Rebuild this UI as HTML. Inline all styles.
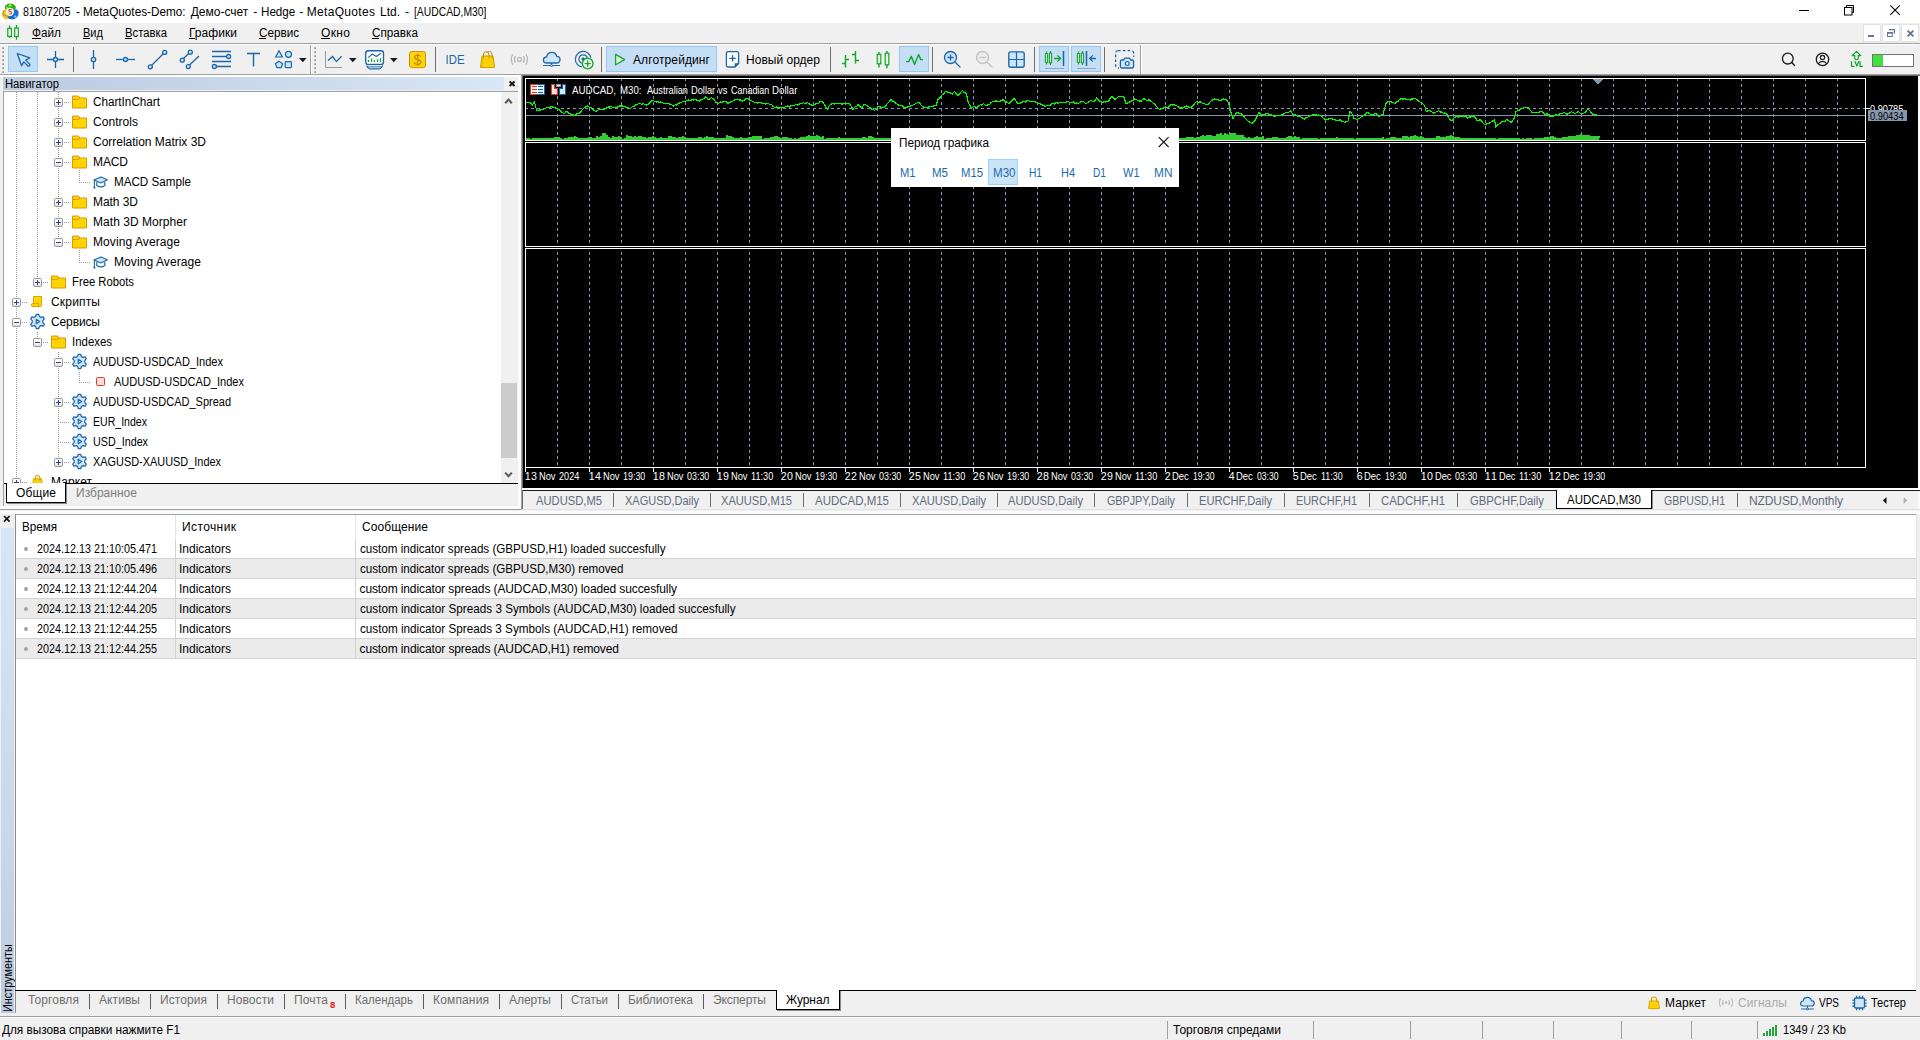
<!DOCTYPE html>
<html><head><meta charset="utf-8"><title>MetaTrader 5</title>
<style>
html,body{margin:0;padding:0;}
body{width:1920px;height:1040px;overflow:hidden;background:#f0f0f0;position:relative;font-family:"Liberation Sans",sans-serif;font-size:12px;}
div,svg,span.t{position:absolute;}
span.t{white-space:pre;}
svg{overflow:visible;}
</style></head><body>
<div style="left:0px;top:0px;width:1920px;height:23px;background:#ffffff;"></div>
<svg style="left:2px;top:3px;" width="17" height="17" viewBox="0 0 17 17">
<ellipse cx="8.3" cy="4.4" rx="5.5" ry="3.9" fill="#2aae14"/>
<ellipse cx="5.2" cy="4.6" rx="1.8" ry="1" transform="rotate(-35 5.2 4.6)" fill="#6fdc48"/>
<ellipse cx="8.2" cy="2.4" rx="1.5" ry="1.3" fill="#8be868"/>
<ellipse cx="3.9" cy="11.4" rx="3.6" ry="4.8" transform="rotate(-22 3.9 11.4)" fill="#d4a412"/>
<ellipse cx="3.4" cy="10" rx="1.2" ry="2" transform="rotate(-15 3.4 10)" fill="#f0cf3c"/>
<path d="M5 14 Q8 17.6 13.4 15.4 L11 12 Z" fill="#1463d2"/>
<ellipse cx="12.9" cy="11" rx="3.5" ry="4.9" transform="rotate(20 12.9 11)" fill="#1a6fe0"/>
<ellipse cx="3.6" cy="14.6" rx="2.6" ry="1.4" transform="rotate(20 3.6 14.6)" fill="#f2c81e"/>
<ellipse cx="13.2" cy="13.6" rx="1.3" ry="1.1" fill="#62d0ff"/>
<circle cx="7.9" cy="8.8" r="4.15" fill="#f3f1ef"/>
<path d="M9.7 6.5 H7.1 V8.5 Q8.2 8.1 9 8.5 Q9.9 9 9.7 10 Q9.4 11.2 6.9 10.7" fill="none" stroke="#e0661c" stroke-width="1.15"/>
</svg>
<span class="t" style="left:23.3px;top:3.84px;font-size:12px;line-height:16px;color:#000;transform-origin:0 0;transform:scaleX(0.8878);">81807205</span>
<span class="t" style="left:76px;top:3.84px;font-size:12px;line-height:16px;color:#000;letter-spacing:0.000px;">-</span>
<span class="t" style="left:82.7px;top:3.84px;font-size:12px;line-height:16px;color:#000;transform-origin:0 0;transform:scaleX(0.9798);">MetaQuotes-Demo:</span>
<span class="t" style="left:190.7px;top:3.84px;font-size:12px;line-height:16px;color:#000;letter-spacing:-0.001px;">Демо-счет</span>
<span class="t" style="left:253.3px;top:3.84px;font-size:12px;line-height:16px;color:#000;letter-spacing:0.000px;">-</span>
<span class="t" style="left:260.7px;top:3.84px;font-size:12px;line-height:16px;color:#000;transform-origin:0 0;transform:scaleX(0.9696);">Hedge</span>
<span class="t" style="left:299.3px;top:3.84px;font-size:12px;line-height:16px;color:#000;letter-spacing:0.000px;">-</span>
<span class="t" style="left:306.7px;top:3.84px;font-size:12px;line-height:16px;color:#000;letter-spacing:0.325px;">MetaQuotes</span>
<span class="t" style="left:380px;top:3.84px;font-size:12px;line-height:16px;color:#000;letter-spacing:-0.005px;">Ltd.</span>
<span class="t" style="left:405px;top:3.84px;font-size:12px;line-height:16px;color:#000;letter-spacing:0.000px;">-</span>
<span class="t" style="left:414.3px;top:3.84px;font-size:12px;line-height:16px;color:#000;transform-origin:0 0;transform:scaleX(0.8616);">[AUDCAD,M30]</span>
<div style="left:1799px;top:10px;width:10px;height:1px;background:#000;"></div>
<svg style="left:1844px;top:5px;" width="11" height="11" viewBox="0 0 11 11"><path d="M2.5 2.5 V0.5 H9.5 V7.5 H8" fill="none" stroke="#000" stroke-width="1"/><rect x="0.5" y="2.5" width="7.5" height="7.5" fill="none" stroke="#000" stroke-width="1"/></svg>
<svg style="left:1890px;top:5px;" width="11" height="11" viewBox="0 0 11 11"><path d="M0.3 0.3 L9.8 9.8 M9.8 0.3 L0.3 9.8" stroke="#000" stroke-width="1.1" fill="none"/></svg>
<svg style="left:5px;top:25px;" width="16" height="16" viewBox="0 0 16 16">
<g fill="#f2fbf2" stroke="#0fa52a" stroke-width="1.2">
<path d="M4.6 0.6 V3 M4.6 11.4 V13"/><rect x="2.8" y="3.4" width="3.6" height="8"/>
<path d="M11.5 0 V3 M11.5 11.6 V14.8"/><rect x="9.7" y="3" width="3.6" height="8.6"/>
</g></svg>
<span class="t" style="left:32px;top:24.84px;font-size:12px;line-height:16px;color:#000;transform-origin:0 0;transform:scaleX(0.9825);">Файл</span>
<span class="t" style="left:83px;top:24.84px;font-size:12px;line-height:16px;color:#000;transform-origin:0 0;transform:scaleX(0.9209);">Вид</span>
<span class="t" style="left:125px;top:24.84px;font-size:12px;line-height:16px;color:#000;transform-origin:0 0;transform:scaleX(0.9415);">Вставка</span>
<span class="t" style="left:189px;top:24.84px;font-size:12px;line-height:16px;color:#000;letter-spacing:0.049px;">Графики</span>
<span class="t" style="left:259px;top:24.84px;font-size:12px;line-height:16px;color:#000;transform-origin:0 0;transform:scaleX(0.9734);">Сервис</span>
<span class="t" style="left:321px;top:24.84px;font-size:12px;line-height:16px;color:#000;letter-spacing:0.370px;">Окно</span>
<span class="t" style="left:372px;top:24.84px;font-size:12px;line-height:16px;color:#000;transform-origin:0 0;transform:scaleX(0.9771);">Справка</span>
<div style="left:32px;top:38px;width:9px;height:1px;background:#000;"></div>
<div style="left:83px;top:38px;width:7px;height:1px;background:#000;"></div>
<div style="left:125px;top:38px;width:7px;height:1px;background:#000;"></div>
<div style="left:189px;top:38px;width:6px;height:1px;background:#000;"></div>
<div style="left:259px;top:38px;width:7px;height:1px;background:#000;"></div>
<div style="left:321px;top:38px;width:9px;height:1px;background:#000;"></div>
<div style="left:372px;top:38px;width:7px;height:1px;background:#000;"></div>
<div style="left:1863px;top:24px;width:18px;height:18px;background:#ffffff;box-shadow:inset 0 0 0 1px #e2e2e2;"></div>
<div style="left:1882px;top:24px;width:18px;height:18px;background:#ffffff;box-shadow:inset 0 0 0 1px #e2e2e2;"></div>
<div style="left:1901px;top:24px;width:18px;height:18px;background:#ffffff;box-shadow:inset 0 0 0 1px #e2e2e2;"></div>
<div style="left:1868px;top:35px;width:6px;height:2px;background:#62788e;"></div>
<svg style="left:1886px;top:28px;" width="10" height="10" viewBox="0 0 10 10"><path d="M3 1.6 H8.9 M8.4 1 V5.8" fill="none" stroke="#62788e" stroke-width="1.2"/><rect x="1.5" y="5" width="4.8" height="3.5" fill="#fff" stroke="#62788e" stroke-width="1"/><path d="M1 4.8 H6.8" stroke="#62788e" stroke-width="1.6"/></svg>
<svg style="left:1906px;top:29px;" width="9" height="9" viewBox="0 0 9 9"><path d="M1.6 1.6 L7.4 7.4 M7.4 1.6 L1.6 7.4" stroke="#62788e" stroke-width="1.9" fill="none"/></svg>
<div style="left:0px;top:43px;width:1920px;height:1px;background:#a0a0a0;"></div>
<div style="left:0px;top:44px;width:1920px;height:1px;background:#ffffff;"></div>
<div style="left:0px;top:74px;width:1920px;height:1px;background:#a0a0a0;"></div>
<div style="left:0px;top:75px;width:1920px;height:1px;background:#f7f7f7;"></div>
<div style="left:0px;top:1016px;width:1920px;height:1px;background:#a0a0a0;"></div>
<div style="left:0px;top:1017px;width:1920px;height:1px;background:#ffffff;"></div>
<span class="t" style="left:2px;top:1021.74px;font-size:12px;line-height:16px;color:#000;transform-origin:0 0;transform:scaleX(0.9811);">Для вызова справки нажмите F1</span>
<div style="left:1167px;top:1021px;width:1px;height:18px;background:#a0a0a0;"></div>
<div style="left:1313px;top:1021px;width:1px;height:18px;background:#a0a0a0;"></div>
<div style="left:1410px;top:1021px;width:1px;height:18px;background:#a0a0a0;"></div>
<div style="left:1482px;top:1021px;width:1px;height:18px;background:#a0a0a0;"></div>
<div style="left:1553px;top:1021px;width:1px;height:18px;background:#a0a0a0;"></div>
<div style="left:1621px;top:1021px;width:1px;height:18px;background:#a0a0a0;"></div>
<div style="left:1691px;top:1021px;width:1px;height:18px;background:#a0a0a0;"></div>
<div style="left:1757px;top:1021px;width:1px;height:18px;background:#a0a0a0;"></div>
<span class="t" style="left:1173px;top:1021.74px;font-size:12px;line-height:16px;color:#000;letter-spacing:0.021px;">Торговля спредами</span>
<div style="left:1763px;top:1033px;width:2px;height:3px;background:#22a83a;"></div>
<div style="left:1766px;top:1031px;width:2px;height:5px;background:#22a83a;"></div>
<div style="left:1769px;top:1029px;width:2px;height:7px;background:#22a83a;"></div>
<div style="left:1772px;top:1027px;width:2px;height:9px;background:#22a83a;"></div>
<div style="left:1775px;top:1025px;width:2px;height:11px;background:#22a83a;"></div>
<span class="t" style="left:1783px;top:1021.74px;font-size:12px;line-height:16px;color:#000;transform-origin:0 0;transform:scaleX(0.9256);">1349 / 23 Kb</span>
<div style="left:2px;top:47px;width:2px;height:2px;background:#b8b8b8;"></div>
<div style="left:3px;top:48px;width:1px;height:1px;background:#909090;"></div>
<div style="left:2px;top:51px;width:2px;height:2px;background:#b8b8b8;"></div>
<div style="left:3px;top:52px;width:1px;height:1px;background:#909090;"></div>
<div style="left:2px;top:55px;width:2px;height:2px;background:#b8b8b8;"></div>
<div style="left:3px;top:56px;width:1px;height:1px;background:#909090;"></div>
<div style="left:2px;top:59px;width:2px;height:2px;background:#b8b8b8;"></div>
<div style="left:3px;top:60px;width:1px;height:1px;background:#909090;"></div>
<div style="left:2px;top:63px;width:2px;height:2px;background:#b8b8b8;"></div>
<div style="left:3px;top:64px;width:1px;height:1px;background:#909090;"></div>
<div style="left:2px;top:67px;width:2px;height:2px;background:#b8b8b8;"></div>
<div style="left:3px;top:68px;width:1px;height:1px;background:#909090;"></div>
<div style="left:2px;top:71px;width:2px;height:2px;background:#b8b8b8;"></div>
<div style="left:3px;top:72px;width:1px;height:1px;background:#909090;"></div>
<div style="left:8px;top:46px;width:30px;height:26px;background:#c4def5;box-shadow:inset 0 0 0 1px #92c9f7;"></div>
<div style="left:73px;top:47px;width:1px;height:25px;background:#707070;"></div>
<svg style="left:299px;top:58px;" width="8" height="5" viewBox="0 0 8 5"><path d="M0 0 H7.6 L3.8 4.2 Z" fill="#1a1a1a"/></svg>
<div style="left:310px;top:45px;width:1px;height:29px;background:#a0a0a0;"></div>
<div style="left:311px;top:45px;width:1px;height:29px;background:#ffffff;"></div>
<div style="left:314px;top:47px;width:2px;height:2px;background:#b8b8b8;"></div>
<div style="left:315px;top:48px;width:1px;height:1px;background:#909090;"></div>
<div style="left:314px;top:51px;width:2px;height:2px;background:#b8b8b8;"></div>
<div style="left:315px;top:52px;width:1px;height:1px;background:#909090;"></div>
<div style="left:314px;top:55px;width:2px;height:2px;background:#b8b8b8;"></div>
<div style="left:315px;top:56px;width:1px;height:1px;background:#909090;"></div>
<div style="left:314px;top:59px;width:2px;height:2px;background:#b8b8b8;"></div>
<div style="left:315px;top:60px;width:1px;height:1px;background:#909090;"></div>
<div style="left:314px;top:63px;width:2px;height:2px;background:#b8b8b8;"></div>
<div style="left:315px;top:64px;width:1px;height:1px;background:#909090;"></div>
<div style="left:314px;top:67px;width:2px;height:2px;background:#b8b8b8;"></div>
<div style="left:315px;top:68px;width:1px;height:1px;background:#909090;"></div>
<div style="left:314px;top:71px;width:2px;height:2px;background:#b8b8b8;"></div>
<div style="left:315px;top:72px;width:1px;height:1px;background:#909090;"></div>
<svg style="left:349px;top:58px;" width="8" height="5" viewBox="0 0 8 5"><path d="M0 0 H7.6 L3.8 4.2 Z" fill="#1a1a1a"/></svg>
<svg style="left:390px;top:58px;" width="8" height="5" viewBox="0 0 8 5"><path d="M0 0 H7.6 L3.8 4.2 Z" fill="#1a1a1a"/></svg>
<div style="left:435px;top:47px;width:1px;height:25px;background:#707070;"></div>
<div style="left:601px;top:47px;width:1px;height:25px;background:#707070;"></div>
<div style="left:606px;top:46px;width:111px;height:26px;background:#c4def5;box-shadow:inset 0 0 0 1px #92c9f7;"></div>
<span class="t" style="left:633px;top:51.74px;font-size:12px;line-height:16px;color:#000;letter-spacing:0.109px;">Алготрейдинг</span>
<span class="t" style="left:746px;top:51.74px;font-size:12px;line-height:16px;color:#000;letter-spacing:0.019px;">Новый ордер</span>
<div style="left:830px;top:47px;width:1px;height:25px;background:#707070;"></div>
<div style="left:899px;top:46px;width:30px;height:26px;background:#c4def5;box-shadow:inset 0 0 0 1px #92c9f7;"></div>
<div style="left:932px;top:47px;width:1px;height:25px;background:#707070;"></div>
<div style="left:1034px;top:47px;width:1px;height:25px;background:#707070;"></div>
<div style="left:1039px;top:46px;width:30px;height:26px;background:#c4def5;box-shadow:inset 0 0 0 1px #92c9f7;"></div>
<div style="left:1071px;top:46px;width:30px;height:26px;background:#c4def5;box-shadow:inset 0 0 0 1px #92c9f7;"></div>
<div style="left:1045px;top:68px;width:19px;height:1px;background:#a3a3a3;"></div>
<div style="left:1077px;top:68px;width:19px;height:1px;background:#a3a3a3;"></div>
<div style="left:1104px;top:47px;width:1px;height:25px;background:#707070;"></div>
<div style="left:1140px;top:45px;width:1px;height:29px;background:#a0a0a0;"></div>
<div style="left:1141px;top:45px;width:1px;height:29px;background:#ffffff;"></div>
<div style="left:1872px;top:54px;width:42px;height:13px;background:#fff;box-shadow:inset 0 0 0 1px #747474;"></div>
<div style="left:1873px;top:55px;width:10px;height:11px;background:#3fe03f;"></div>
<svg style="left:0px;top:0px;" width="1920" height="80" viewBox="0 0 1920 80"><path d="M17.3 53.5 L29.8 57.8 L25.7 60.1 L29.7 64.1 Q30.3 65.6 28.9 66 Q27.9 66.4 27.4 65.6 L23.9 61.9 L21.6 65.7 Z" stroke="#1a66aa" fill="#c8e6fb" stroke-width="1.3" stroke-linejoin="round"/><path d="M47 59.5 H64 M55.5 51 V68" stroke="#1a66aa" fill="none" stroke-width="1.3" /><circle cx="55.5" cy="59.5" r="2" stroke="#1a66aa" fill="#cfe6fa" stroke-width="1.3"/><path d="M93.5 50 V69" stroke="#1a66aa" fill="none" stroke-width="1.3" /><circle cx="93.5" cy="59.5" r="2.2" stroke="#1a66aa" fill="#cfe6fa" stroke-width="1.3"/><path d="M116 59.5 H135" stroke="#1a66aa" fill="none" stroke-width="1.3" /><circle cx="125.5" cy="59.5" r="2" stroke="#1a66aa" fill="#cfe6fa" stroke-width="1.3"/><path d="M151 66 L164 53" stroke="#1a66aa" fill="none" stroke-width="1.3" /><circle cx="150.3" cy="66.8" r="2" stroke="#1a66aa" fill="#cfe6fa" stroke-width="1.3"/><circle cx="164.7" cy="52.4" r="2" stroke="#1a66aa" fill="#cfe6fa" stroke-width="1.3"/><path d="M183 59 L189.5 52.8 M189 65.5 L199 56" stroke="#1a66aa" fill="none" stroke-width="1.3" /><circle cx="182.3" cy="60.2" r="2" stroke="#1a66aa" fill="#cfe6fa" stroke-width="1.3"/><circle cx="190.3" cy="52.2" r="2" stroke="#1a66aa" fill="#cfe6fa" stroke-width="1.3"/><circle cx="188.3" cy="66.6" r="2" stroke="#1a66aa" fill="#cfe6fa" stroke-width="1.3"/><path d="M212 51.5 H231 M212 56.5 H227 M212 61.5 H231 M217 66.5 H231" stroke="#1a66aa" fill="none" stroke-width="1.3" /><circle cx="228.6" cy="56.5" r="2" stroke="#1a66aa" fill="#cfe6fa" stroke-width="1.3"/><circle cx="214.4" cy="66.5" r="2" stroke="#1a66aa" fill="#cfe6fa" stroke-width="1.3"/><path d="M247 53.5 H260 M253.5 53.5 V66.5" stroke="#1a66aa" fill="none" stroke-width="1.4" /><path d="M275.6 57 L279 50.8 L282.4 57 Z" stroke="#1a66aa" fill="#cfe6fa" stroke-width="1.2" /><circle cx="288.5" cy="54.3" r="3" stroke="#1a66aa" fill="#cfe6fa" stroke-width="1.2"/><path d="M279 61.2 L282.6 63.8 L281.2 67.6 H276.8 L275.4 63.8 Z" stroke="#1a66aa" fill="#cfe6fa" stroke-width="1.2" /><rect x="285.2" y="61.6" width="6.2" height="6" rx="0.8" stroke="#1a66aa" fill="#cfe6fa" stroke-width="1.2"/><path d="M325.5 51 V67.5 H342" stroke="#9a9a9a" fill="none" stroke-width="1" /><path d="M328 60.5 L332.6 56.4 L336.4 61.6 L341.6 56.2" stroke="#1a66aa" fill="none" stroke-width="1.3" /><rect x="365.7" y="50.7" width="17.8" height="13.8" rx="2.6" stroke="#1a66aa" fill="#fff" stroke-width="1.35"/><path d="M366.6 65.6 L368.2 68 Q368.8 68.8 370 68.8 H379.2 Q380.4 68.8 381 68 L382.6 65.6" stroke="#1a66aa" fill="#fff" stroke-width="1.2" /><path d="M367.6 66.9 H381.6" stroke="#1a66aa" fill="none" stroke-width="1.0" /><path d="M368.2 57.6 L372.3 54 L376.3 56.5 L380.7 53.2" stroke="#1a66aa" fill="none" stroke-width="1.15" /><rect x="367.8" y="59.8" width="1.25" height="2.3" rx="0.5" fill="#12a52a"/><rect x="370.9" y="58.2" width="1.25" height="3.9" rx="0.5" fill="#12a52a"/><rect x="373.8" y="60" width="1.25" height="2.1" rx="0.5" fill="#12a52a"/><rect x="376.9" y="59" width="1.25" height="3.1" rx="0.5" fill="#12a52a"/><rect x="379.9" y="58" width="1.25" height="4.1" rx="0.5" fill="#12a52a"/><rect x="409.5" y="51.5" width="16" height="16.2" rx="2.4" fill="#ffd400" stroke="#c9920c" stroke-width="1"/><path d="M420.6 56.8 Q420.2 55 417.6 55 Q414.6 55 414.6 57.2 Q414.6 59 417.6 59.6 Q420.8 60.2 420.8 62.2 Q420.8 64.4 417.6 64.4 Q414.8 64.4 414.4 62.4 M417.6 53.6 V65.8" stroke="#c48c08" fill="none" stroke-width="1.25" /><text x="445.6" y="64.3" font-size="12.5" fill="#1a66aa" font-family="Liberation Sans" textLength="19" lengthAdjust="spacingAndGlyphs">IDE</text><path d="M482 56 L480.5 67.5 H494.5 L493 56 Z" stroke="#cf9a08" fill="#ffd200" stroke-width="1" /><path d="M482.6 56.6 L481.6 67" stroke="#e8b400" fill="none" stroke-width="1.2" /><path d="M483.4 58.6 V55 Q483.4 51.5 486.2 51.5 Q489 51.5 489 55 V58.6 M486.6 53 Q487.4 51.5 489.4 51.5 Q492.2 51.5 492.2 55 V58.6" stroke="#c9920c" fill="none" stroke-width="1.0" /><circle cx="519.4" cy="59.4" r="2" stroke="#b6b6b6" fill="none" stroke-width="1.2"/><path d="M515.4 56 Q513.4 59.4 515.4 62.8 M523.4 56 Q525.4 59.4 523.4 62.8 M512.8 54.2 Q509.8 59.4 512.8 64.6 M526 54.2 Q529 59.4 526 64.6" stroke="#b6b6b6" fill="none" stroke-width="1.2" /><path d="M547 63 Q543.2 63 543.4 59.8 Q543.6 57 546.6 56.8 Q547.4 52.4 551.8 52.4 Q555.8 52.4 556.8 56.4 Q560.2 56.6 560 60 Q559.8 63 556.4 63 Z" stroke="#1a66aa" fill="#cfe6fa" stroke-width="1.3" /><path d="M543 65.5 H560 M551.5 63 V65.5" stroke="#1a66aa" fill="none" stroke-width="1.1" /><circle cx="551.5" cy="65.6" r="1" stroke="#1a66aa" fill="#cfe6fa" stroke-width="1"/><circle cx="583.2" cy="59.1" r="1.5" stroke="#1a66aa" fill="#1a66aa" stroke-width="0.5"/><path d="M581.8 63.1 A4.2 4.2 0 1 1 587.3 58.5 M581.85 66.9 A7.8 7.8 0 1 1 590.8 57.6" stroke="#1a66aa" fill="none" stroke-width="1.2" /><circle cx="587.7" cy="63.6" r="5.3" stroke="#14a32c" fill="#eeffee" stroke-width="1.4"/><path d="M584.6 63.6 H590.8 M587.7 60.5 V66.7" stroke="#14a32c" fill="none" stroke-width="1.3" /><path d="M615.6 54.4 L624.6 59.6 L615.6 64.8 Z" stroke="#16a82e" fill="#e2f6e4" stroke-width="1.3" stroke-linejoin="round"/><path d="M728.2 51.6 H736.8 Q738.6 51.6 738.6 53.4 V63.4 L735 67 H728.2 Q726.4 67 726.4 65.2 V53.4 Q726.4 51.6 728.2 51.6 Z" stroke="#1a66aa" fill="#fff" stroke-width="1.3" /><path d="M738.6 63.4 H735 V67 Z" stroke="#1a66aa" fill="#1a66aa" stroke-width="0.6" /><path d="M729.4 58.4 H735.8 M732.6 55.2 V61.6" stroke="#1a66aa" fill="none" stroke-width="1.3" /><path d="M845.5 55 V67.4 M842 63.5 H845.5 M845.5 59.5 H849 M855.5 51 V63.4 M852 54.5 H855.5 M855.5 60.5 H859" stroke="#0fa52a" fill="none" stroke-width="1.4" /><path d="M879 52 V54 M879 64 V67.4 M887 51 V53 M887 65 V68.2" stroke="#0fa52a" fill="none" stroke-width="1.4" /><rect x="877.2" y="54.2" width="3.6" height="9.6" fill="#e2f6e4" stroke="#0fa52a" stroke-width="1.2"/><rect x="885.2" y="53.2" width="3.6" height="11.6" fill="#e2f6e4" stroke="#0fa52a" stroke-width="1.2"/><path d="M906 61.6 H908.6 L911.4 56.4 L914.6 64.6 L918.6 54.6 L920.8 59.6 H923" stroke="#0fa52a" fill="none" stroke-width="1.4" stroke-linejoin="round"/><circle cx="950.5" cy="57.5" r="6" stroke="#1a66aa" fill="#cfe6fa" stroke-width="1.3"/><path d="M947.4 57.5 H953.6 M950.5 54.4 V60.6" stroke="#1a66aa" fill="none" stroke-width="1.3" /><path d="M955 62 L960.4 67.4" stroke="#1a66aa" fill="none" stroke-width="1.3" /><circle cx="982.5" cy="57.5" r="6" stroke="#c2c2c2" fill="#ececec" stroke-width="1.4"/><path d="M979.4 57.5 H985.6" stroke="#c2c2c2" fill="none" stroke-width="1.3" /><path d="M987 62 L992.4 67.4" stroke="#c2c2c2" fill="none" stroke-width="1.3" /><rect x="1008.8" y="51.8" width="15.4" height="15.4" rx="2" stroke="#1a66aa" fill="#cfe6fa" stroke-width="1.35"/><path d="M1016.5 52 V67 M1009 59.5 H1024" stroke="#1a66aa" fill="none" stroke-width="1.2" /><path d="M1046.5 51.4 V53.4 M1046.5 62.6 V64.6 M1050.5 51 V53 M1050.5 63 V65" stroke="#0fa52a" fill="none" stroke-width="1.1" /><rect x="1045.4" y="53.6" width="2.2" height="8.8" fill="#e2f6e4" stroke="#0fa52a" stroke-width="1.05"/><rect x="1049.4" y="53.2" width="2.2" height="9.6" fill="#e2f6e4" stroke="#0fa52a" stroke-width="1.05"/><path d="M1078.5 51.4 V53.4 M1078.5 62.6 V64.6 M1082.5 51 V53 M1082.5 63 V65" stroke="#0fa52a" fill="none" stroke-width="1.1" /><rect x="1077.4" y="53.6" width="2.2" height="8.8" fill="#e2f6e4" stroke="#0fa52a" stroke-width="1.05"/><rect x="1081.4" y="53.2" width="2.2" height="9.6" fill="#e2f6e4" stroke="#0fa52a" stroke-width="1.05"/><path d="M1054 58.5 H1060.4 M1057.4 55.4 L1060.6 58.5 L1057.4 61.6" stroke="#0fa52a" fill="none" stroke-width="1.3" /><path d="M1063.5 51 V66" stroke="#1a66aa" fill="none" stroke-width="1.5" /><path d="M1086.5 51 V66" stroke="#1a66aa" fill="none" stroke-width="1.5" /><path d="M1089.6 58.5 H1096 M1092.8 55.4 L1089.6 58.5 L1092.8 61.6" stroke="#1a66aa" fill="none" stroke-width="1.3" /><rect x="1115.6" y="50.6" width="18" height="17.4" rx="2.4" stroke="#1a66aa" fill="none" stroke-width="1.3" stroke-dasharray="2.6 2.2"/><rect x="1119" y="57" width="16" height="12" fill="#f0f0f0"/><path d="M1121.8 60 H1123.6 L1124.8 58.2 H1129.6 L1130.8 60 H1132.2 Q1133.6 60 1133.6 61.4 V66.6 Q1133.6 68 1132.2 68 H1121.8 Q1120.4 68 1120.4 66.6 V61.4 Q1120.4 60 1121.8 60 Z" stroke="#1a66aa" fill="#cfe6fa" stroke-width="1.3" /><circle cx="1127.2" cy="63.6" r="1.9" stroke="#1a66aa" fill="#fff" stroke-width="1.2"/><circle cx="1787.8" cy="58.6" r="5.4" stroke="#1a1a1a" fill="none" stroke-width="1.3"/><path d="M1791.8 62.6 L1794.8 65.8" stroke="#1a1a1a" fill="none" stroke-width="1.4" /><circle cx="1822.5" cy="59.4" r="6.2" stroke="#1a1a1a" fill="none" stroke-width="1.3"/><circle cx="1822.5" cy="57.4" r="2.1" stroke="#1a1a1a" fill="none" stroke-width="1.2"/><path d="M1818.2 63.6 Q1822.5 59.2 1826.8 63.6" stroke="#1a1a1a" fill="none" stroke-width="1.2" /><path d="M1856.5 51.4 L1860.8 55.7 H1858.2 V58.4 Q1858.2 59.6 1856.5 59.6 Q1854.8 59.6 1854.8 58.4 V55.7 H1852.2 Z" stroke="#10a52c" fill="#e4f8e6" stroke-width="1.2" stroke-linejoin="round"/><path d="M1851.5 61.2 V66.3 H1854.4 M1854.9 61.2 L1856.9 66 L1858.9 61.2 M1860 61.2 V66.3 H1862.9" stroke="#10a52c" fill="none" stroke-width="1.25" stroke-linejoin="round"/></svg>
<div style="left:3px;top:77px;width:501px;height:13px;background:linear-gradient(90deg,#bccbdf 0%,#c6d6e9 40%,#d9e6f5 100%);"></div>
<span class="t" style="left:5px;top:76.04px;font-size:12px;line-height:16px;color:#000;transform-origin:0 0;transform:scaleX(0.9366);">Навигатор</span>
<svg style="left:509px;top:81px;" width="7" height="6" viewBox="0 0 7 6"><path d="M0.6 0.5 L5.6 5 M5.6 0.5 L0.6 5" stroke="#111" stroke-width="1.8" fill="none"/></svg>
<div style="left:3px;top:91px;width:515px;height:1px;background:#a0a0a0;"></div>
<div style="left:3px;top:91px;width:1px;height:415px;background:#a0a0a0;"></div>
<div style="left:4px;top:92px;width:497px;height:391px;background:#ffffff;"></div>
<div style="left:501px;top:92px;width:17px;height:391px;background:#f0f0f0;"></div>
<div style="left:501px;top:383px;width:16px;height:75px;background:#cdcdcd;"></div>
<svg style="left:504px;top:97px;" width="10" height="8" viewBox="0 0 10 8"><path d="M1.2 6.2 L4.5 2.6 L7.8 6.2" stroke="#5a5a5a" stroke-width="2.1" fill="none"/></svg>
<svg style="left:504px;top:471px;" width="10" height="8" viewBox="0 0 10 8"><path d="M1.2 1.6 L4.5 5.2 L7.8 1.6" stroke="#5a5a5a" stroke-width="2.1" fill="none"/></svg>
<span class="t" style="left:93px;top:93.84px;font-size:12px;line-height:16px;color:#000;transform-origin:0 0;transform:scaleX(0.9752);">ChartInChart</span>
<span class="t" style="left:93px;top:113.84px;font-size:12px;line-height:16px;color:#000;letter-spacing:0.045px;">Controls</span>
<span class="t" style="left:93px;top:133.84px;font-size:12px;line-height:16px;color:#000;letter-spacing:-0.019px;">Correlation Matrix 3D</span>
<span class="t" style="left:93px;top:153.84px;font-size:12px;line-height:16px;color:#000;letter-spacing:-0.115px;">MACD</span>
<span class="t" style="left:114px;top:173.84px;font-size:12px;line-height:16px;color:#000;transform-origin:0 0;transform:scaleX(0.9703);">MACD Sample</span>
<span class="t" style="left:93px;top:193.84px;font-size:12px;line-height:16px;color:#000;letter-spacing:-0.060px;">Math 3D</span>
<span class="t" style="left:93px;top:213.84px;font-size:12px;line-height:16px;color:#000;letter-spacing:0.045px;">Math 3D Morpher</span>
<span class="t" style="left:93px;top:233.84px;font-size:12px;line-height:16px;color:#000;letter-spacing:0.089px;">Moving Average</span>
<span class="t" style="left:114px;top:253.84px;font-size:12px;line-height:16px;color:#000;letter-spacing:0.089px;">Moving Average</span>
<span class="t" style="left:72px;top:273.84px;font-size:12px;line-height:16px;color:#000;transform-origin:0 0;transform:scaleX(0.9389);">Free Robots</span>
<span class="t" style="left:51px;top:293.84px;font-size:12px;line-height:16px;color:#000;letter-spacing:0.180px;">Скрипты</span>
<span class="t" style="left:51px;top:313.84px;font-size:12px;line-height:16px;color:#000;letter-spacing:-0.120px;">Сервисы</span>
<span class="t" style="left:72px;top:333.84px;font-size:12px;line-height:16px;color:#000;transform-origin:0 0;transform:scaleX(0.9517);">Indexes</span>
<span class="t" style="left:93px;top:353.84px;font-size:12px;line-height:16px;color:#000;transform-origin:0 0;transform:scaleX(0.9195);">AUDUSD-USDCAD_Index</span>
<span class="t" style="left:114px;top:373.84px;font-size:12px;line-height:16px;color:#000;transform-origin:0 0;transform:scaleX(0.9195);">AUDUSD-USDCAD_Index</span>
<span class="t" style="left:93px;top:393.84px;font-size:12px;line-height:16px;color:#000;transform-origin:0 0;transform:scaleX(0.9156);">AUDUSD-USDCAD_Spread</span>
<span class="t" style="left:93px;top:413.84px;font-size:12px;line-height:16px;color:#000;transform-origin:0 0;transform:scaleX(0.8798);">EUR_Index</span>
<span class="t" style="left:93px;top:433.84px;font-size:12px;line-height:16px;color:#000;transform-origin:0 0;transform:scaleX(0.8961);">USD_Index</span>
<span class="t" style="left:93px;top:453.84px;font-size:12px;line-height:16px;color:#000;transform-origin:0 0;transform:scaleX(0.9096);">XAGUSD-XAUUSD_Index</span>
<span class="t" style="left:51px;top:473.84px;font-size:12px;line-height:16px;color:#000;letter-spacing:0.072px;">Маркет</span>
<svg style="left:0px;top:0px;clip-path:inset(92px 0 0 0);" width="520" height="483" viewBox="0 0 520 483"><defs><linearGradient id="exg" x1="0" y1="0" x2="0" y2="1"><stop offset="0.45" stop-color="#ffffff"/><stop offset="1" stop-color="#d9d9d9"/></linearGradient></defs><path d="M16.5 92 V484" stroke="#9a9a9a" stroke-width="1" stroke-dasharray="1 1" fill="none"/><path d="M37.5 92 V282" stroke="#9a9a9a" stroke-width="1" stroke-dasharray="1 1" fill="none"/><path d="M37.5 332 V342" stroke="#9a9a9a" stroke-width="1" stroke-dasharray="1 1" fill="none"/><path d="M58.5 92 V242" stroke="#9a9a9a" stroke-width="1" stroke-dasharray="1 1" fill="none"/><path d="M58.5 352 V462" stroke="#9a9a9a" stroke-width="1" stroke-dasharray="1 1" fill="none"/><path d="M79.5 170 V183" stroke="#9a9a9a" stroke-width="1" stroke-dasharray="1 1" fill="none"/><path d="M79.5 250 V263" stroke="#9a9a9a" stroke-width="1" stroke-dasharray="1 1" fill="none"/><path d="M79.5 372 V383" stroke="#9a9a9a" stroke-width="1" stroke-dasharray="1 1" fill="none"/><path d="M64 102.5 H69" stroke="#9a9a9a" stroke-width="1" stroke-dasharray="1 1" fill="none"/><rect x="54.5" y="98.5" width="8" height="8" rx="1.2" fill="url(#exg)" stroke="#959595" stroke-width="1"/><path d="M56 102.5 H61" stroke="#2b3f8c" stroke-width="1"/><path d="M58.5 100 V105" stroke="#2b3f8c" stroke-width="1"/><path d="M72.5 96 H78 Q79.5 96 79.5 98 H86.5 V108 H72.5 Z" fill="#ffd400" stroke="#d89a06" stroke-width="1"/><path d="M73 99.4 H77.6 Q79.4 99.4 79.5 98" fill="none" stroke="#d89a06" stroke-width="1"/><path d="M64 122.5 H69" stroke="#9a9a9a" stroke-width="1" stroke-dasharray="1 1" fill="none"/><rect x="54.5" y="118.5" width="8" height="8" rx="1.2" fill="url(#exg)" stroke="#959595" stroke-width="1"/><path d="M56 122.5 H61" stroke="#2b3f8c" stroke-width="1"/><path d="M58.5 120 V125" stroke="#2b3f8c" stroke-width="1"/><path d="M72.5 116 H78 Q79.5 116 79.5 118 H86.5 V128 H72.5 Z" fill="#ffd400" stroke="#d89a06" stroke-width="1"/><path d="M73 119.4 H77.6 Q79.4 119.4 79.5 118" fill="none" stroke="#d89a06" stroke-width="1"/><path d="M64 142.5 H69" stroke="#9a9a9a" stroke-width="1" stroke-dasharray="1 1" fill="none"/><rect x="54.5" y="138.5" width="8" height="8" rx="1.2" fill="url(#exg)" stroke="#959595" stroke-width="1"/><path d="M56 142.5 H61" stroke="#2b3f8c" stroke-width="1"/><path d="M58.5 140 V145" stroke="#2b3f8c" stroke-width="1"/><path d="M72.5 136 H78 Q79.5 136 79.5 138 H86.5 V148 H72.5 Z" fill="#ffd400" stroke="#d89a06" stroke-width="1"/><path d="M73 139.4 H77.6 Q79.4 139.4 79.5 138" fill="none" stroke="#d89a06" stroke-width="1"/><path d="M64 162.5 H69" stroke="#9a9a9a" stroke-width="1" stroke-dasharray="1 1" fill="none"/><rect x="54.5" y="158.5" width="8" height="8" rx="1.2" fill="url(#exg)" stroke="#959595" stroke-width="1"/><path d="M56 162.5 H61" stroke="#2b3f8c" stroke-width="1"/><path d="M72.5 156 H78 Q79.5 156 79.5 158 H86.5 V168 H72.5 Z" fill="#ffd400" stroke="#d89a06" stroke-width="1"/><path d="M73 159.4 H77.6 Q79.4 159.4 79.5 158" fill="none" stroke="#d89a06" stroke-width="1"/><path d="M81 182.5 H90" stroke="#9a9a9a" stroke-width="1" stroke-dasharray="1 1" fill="none"/><path d="M93.8 180 L101 177 L107.4 179.8 L100.8 183 Z" fill="#cfe6fa" stroke="#1a66aa" stroke-width="1.2" stroke-linejoin="round"/><path d="M96.8 182.2 V185.4 Q100.8 188.2 104.8 185.4 V182" fill="none" stroke="#1a66aa" stroke-width="1.2"/><path d="M94.4 180.6 V186.8" stroke="#1a66aa" stroke-width="1.1"/><circle cx="94.4" cy="187.6" r="1.1" fill="#1a66aa"/><path d="M64 202.5 H69" stroke="#9a9a9a" stroke-width="1" stroke-dasharray="1 1" fill="none"/><rect x="54.5" y="198.5" width="8" height="8" rx="1.2" fill="url(#exg)" stroke="#959595" stroke-width="1"/><path d="M56 202.5 H61" stroke="#2b3f8c" stroke-width="1"/><path d="M58.5 200 V205" stroke="#2b3f8c" stroke-width="1"/><path d="M72.5 196 H78 Q79.5 196 79.5 198 H86.5 V208 H72.5 Z" fill="#ffd400" stroke="#d89a06" stroke-width="1"/><path d="M73 199.4 H77.6 Q79.4 199.4 79.5 198" fill="none" stroke="#d89a06" stroke-width="1"/><path d="M64 222.5 H69" stroke="#9a9a9a" stroke-width="1" stroke-dasharray="1 1" fill="none"/><rect x="54.5" y="218.5" width="8" height="8" rx="1.2" fill="url(#exg)" stroke="#959595" stroke-width="1"/><path d="M56 222.5 H61" stroke="#2b3f8c" stroke-width="1"/><path d="M58.5 220 V225" stroke="#2b3f8c" stroke-width="1"/><path d="M72.5 216 H78 Q79.5 216 79.5 218 H86.5 V228 H72.5 Z" fill="#ffd400" stroke="#d89a06" stroke-width="1"/><path d="M73 219.4 H77.6 Q79.4 219.4 79.5 218" fill="none" stroke="#d89a06" stroke-width="1"/><path d="M64 242.5 H69" stroke="#9a9a9a" stroke-width="1" stroke-dasharray="1 1" fill="none"/><rect x="54.5" y="238.5" width="8" height="8" rx="1.2" fill="url(#exg)" stroke="#959595" stroke-width="1"/><path d="M56 242.5 H61" stroke="#2b3f8c" stroke-width="1"/><path d="M72.5 236 H78 Q79.5 236 79.5 238 H86.5 V248 H72.5 Z" fill="#ffd400" stroke="#d89a06" stroke-width="1"/><path d="M73 239.4 H77.6 Q79.4 239.4 79.5 238" fill="none" stroke="#d89a06" stroke-width="1"/><path d="M81 262.5 H90" stroke="#9a9a9a" stroke-width="1" stroke-dasharray="1 1" fill="none"/><path d="M93.8 260 L101 257 L107.4 259.8 L100.8 263 Z" fill="#cfe6fa" stroke="#1a66aa" stroke-width="1.2" stroke-linejoin="round"/><path d="M96.8 262.2 V265.4 Q100.8 268.2 104.8 265.4 V262" fill="none" stroke="#1a66aa" stroke-width="1.2"/><path d="M94.4 260.6 V266.8" stroke="#1a66aa" stroke-width="1.1"/><circle cx="94.4" cy="267.6" r="1.1" fill="#1a66aa"/><path d="M43 282.5 H48" stroke="#9a9a9a" stroke-width="1" stroke-dasharray="1 1" fill="none"/><rect x="33.5" y="278.5" width="8" height="8" rx="1.2" fill="url(#exg)" stroke="#959595" stroke-width="1"/><path d="M35 282.5 H40" stroke="#2b3f8c" stroke-width="1"/><path d="M37.5 280 V285" stroke="#2b3f8c" stroke-width="1"/><path d="M51.5 276 H57 Q58.5 276 58.5 278 H65.5 V288 H51.5 Z" fill="#ffd400" stroke="#d89a06" stroke-width="1"/><path d="M52 279.4 H56.6 Q58.4 279.4 58.5 278" fill="none" stroke="#d89a06" stroke-width="1"/><path d="M22 302.5 H27" stroke="#9a9a9a" stroke-width="1" stroke-dasharray="1 1" fill="none"/><rect x="12.5" y="298.5" width="8" height="8" rx="1.2" fill="url(#exg)" stroke="#959595" stroke-width="1"/><path d="M14 302.5 H19" stroke="#2b3f8c" stroke-width="1"/><path d="M16.5 300 V305" stroke="#2b3f8c" stroke-width="1"/><path d="M33.5 296.5 H41.5 V305.4 Q41.5 306.5 40.4 306.5 H32 Q30.6 305.2 32 303.5 H33.5 Z" fill="#ffd400" stroke="#dfa000" stroke-width="1" stroke-linejoin="round"/><path d="M33.5 303.5 H38.5 V306.5" fill="none" stroke="#dfa000" stroke-width="1"/><path d="M22 322.5 H27" stroke="#9a9a9a" stroke-width="1" stroke-dasharray="1 1" fill="none"/><rect x="12.5" y="318.5" width="8" height="8" rx="1.2" fill="url(#exg)" stroke="#959595" stroke-width="1"/><path d="M14 322.5 H19" stroke="#2b3f8c" stroke-width="1"/><path d="M36.36 314.29 L38.64 314.29 L39.40 316.55 L40.84 317.38 L43.17 316.91 L44.32 318.88 L42.73 320.67 L42.73 322.33 L44.32 324.12 L43.17 326.09 L40.84 325.62 L39.40 326.45 L38.64 328.71 L36.36 328.71 L35.60 326.45 L34.16 325.62 L31.83 326.09 L30.68 324.12 L32.27 322.33 L32.27 320.67 L30.68 318.88 L31.83 316.91 L34.16 317.38 L35.60 316.55 Z" fill="#cfe6fa" stroke="#1a66aa" stroke-width="1.2" stroke-linejoin="round"/><path d="M36.2 319.2 L39.7 321.5 L36.2 323.8 Z" fill="#e9f4fd" stroke="#1a66aa" stroke-width="1.1" stroke-linejoin="round"/><path d="M43 342.5 H48" stroke="#9a9a9a" stroke-width="1" stroke-dasharray="1 1" fill="none"/><rect x="33.5" y="338.5" width="8" height="8" rx="1.2" fill="url(#exg)" stroke="#959595" stroke-width="1"/><path d="M35 342.5 H40" stroke="#2b3f8c" stroke-width="1"/><path d="M51.5 336 H57 Q58.5 336 58.5 338 H65.5 V348 H51.5 Z" fill="#ffd400" stroke="#d89a06" stroke-width="1"/><path d="M52 339.4 H56.6 Q58.4 339.4 58.5 338" fill="none" stroke="#d89a06" stroke-width="1"/><path d="M64 362.5 H69" stroke="#9a9a9a" stroke-width="1" stroke-dasharray="1 1" fill="none"/><rect x="54.5" y="358.5" width="8" height="8" rx="1.2" fill="url(#exg)" stroke="#959595" stroke-width="1"/><path d="M56 362.5 H61" stroke="#2b3f8c" stroke-width="1"/><path d="M78.36 354.29 L80.64 354.29 L81.40 356.55 L82.84 357.38 L85.17 356.91 L86.32 358.88 L84.73 360.67 L84.73 362.33 L86.32 364.12 L85.17 366.09 L82.84 365.62 L81.40 366.45 L80.64 368.71 L78.36 368.71 L77.60 366.45 L76.16 365.62 L73.83 366.09 L72.68 364.12 L74.27 362.33 L74.27 360.67 L72.68 358.88 L73.83 356.91 L76.16 357.38 L77.60 356.55 Z" fill="#cfe6fa" stroke="#1a66aa" stroke-width="1.2" stroke-linejoin="round"/><path d="M78.2 359.2 L81.7 361.5 L78.2 363.8 Z" fill="#e9f4fd" stroke="#1a66aa" stroke-width="1.1" stroke-linejoin="round"/><path d="M81 382.5 H90" stroke="#9a9a9a" stroke-width="1" stroke-dasharray="1 1" fill="none"/><rect x="96.5" y="377.5" width="8" height="8" rx="0.9" fill="#ffddd6" stroke="#e03c31" stroke-width="1"/><path d="M64 402.5 H69" stroke="#9a9a9a" stroke-width="1" stroke-dasharray="1 1" fill="none"/><rect x="54.5" y="398.5" width="8" height="8" rx="1.2" fill="url(#exg)" stroke="#959595" stroke-width="1"/><path d="M56 402.5 H61" stroke="#2b3f8c" stroke-width="1"/><path d="M58.5 400 V405" stroke="#2b3f8c" stroke-width="1"/><path d="M78.36 394.29 L80.64 394.29 L81.40 396.55 L82.84 397.38 L85.17 396.91 L86.32 398.88 L84.73 400.67 L84.73 402.33 L86.32 404.12 L85.17 406.09 L82.84 405.62 L81.40 406.45 L80.64 408.71 L78.36 408.71 L77.60 406.45 L76.16 405.62 L73.83 406.09 L72.68 404.12 L74.27 402.33 L74.27 400.67 L72.68 398.88 L73.83 396.91 L76.16 397.38 L77.60 396.55 Z" fill="#cfe6fa" stroke="#1a66aa" stroke-width="1.2" stroke-linejoin="round"/><path d="M78.2 399.2 L81.7 401.5 L78.2 403.8 Z" fill="#e9f4fd" stroke="#1a66aa" stroke-width="1.1" stroke-linejoin="round"/><path d="M60 422.5 H69" stroke="#9a9a9a" stroke-width="1" stroke-dasharray="1 1" fill="none"/><path d="M78.36 414.29 L80.64 414.29 L81.40 416.55 L82.84 417.38 L85.17 416.91 L86.32 418.88 L84.73 420.67 L84.73 422.33 L86.32 424.12 L85.17 426.09 L82.84 425.62 L81.40 426.45 L80.64 428.71 L78.36 428.71 L77.60 426.45 L76.16 425.62 L73.83 426.09 L72.68 424.12 L74.27 422.33 L74.27 420.67 L72.68 418.88 L73.83 416.91 L76.16 417.38 L77.60 416.55 Z" fill="#cfe6fa" stroke="#1a66aa" stroke-width="1.2" stroke-linejoin="round"/><path d="M78.2 419.2 L81.7 421.5 L78.2 423.8 Z" fill="#e9f4fd" stroke="#1a66aa" stroke-width="1.1" stroke-linejoin="round"/><path d="M60 442.5 H69" stroke="#9a9a9a" stroke-width="1" stroke-dasharray="1 1" fill="none"/><path d="M78.36 434.29 L80.64 434.29 L81.40 436.55 L82.84 437.38 L85.17 436.91 L86.32 438.88 L84.73 440.67 L84.73 442.33 L86.32 444.12 L85.17 446.09 L82.84 445.62 L81.40 446.45 L80.64 448.71 L78.36 448.71 L77.60 446.45 L76.16 445.62 L73.83 446.09 L72.68 444.12 L74.27 442.33 L74.27 440.67 L72.68 438.88 L73.83 436.91 L76.16 437.38 L77.60 436.55 Z" fill="#cfe6fa" stroke="#1a66aa" stroke-width="1.2" stroke-linejoin="round"/><path d="M78.2 439.2 L81.7 441.5 L78.2 443.8 Z" fill="#e9f4fd" stroke="#1a66aa" stroke-width="1.1" stroke-linejoin="round"/><path d="M64 462.5 H69" stroke="#9a9a9a" stroke-width="1" stroke-dasharray="1 1" fill="none"/><rect x="54.5" y="458.5" width="8" height="8" rx="1.2" fill="url(#exg)" stroke="#959595" stroke-width="1"/><path d="M56 462.5 H61" stroke="#2b3f8c" stroke-width="1"/><path d="M58.5 460 V465" stroke="#2b3f8c" stroke-width="1"/><path d="M78.36 454.29 L80.64 454.29 L81.40 456.55 L82.84 457.38 L85.17 456.91 L86.32 458.88 L84.73 460.67 L84.73 462.33 L86.32 464.12 L85.17 466.09 L82.84 465.62 L81.40 466.45 L80.64 468.71 L78.36 468.71 L77.60 466.45 L76.16 465.62 L73.83 466.09 L72.68 464.12 L74.27 462.33 L74.27 460.67 L72.68 458.88 L73.83 456.91 L76.16 457.38 L77.60 456.55 Z" fill="#cfe6fa" stroke="#1a66aa" stroke-width="1.2" stroke-linejoin="round"/><path d="M78.2 459.2 L81.7 461.5 L78.2 463.8 Z" fill="#e9f4fd" stroke="#1a66aa" stroke-width="1.1" stroke-linejoin="round"/><path d="M22 482.5 H27" stroke="#9a9a9a" stroke-width="1" stroke-dasharray="1 1" fill="none"/><rect x="12.5" y="478.5" width="8" height="8" rx="1.2" fill="url(#exg)" stroke="#959595" stroke-width="1"/><path d="M14 482.5 H19" stroke="#2b3f8c" stroke-width="1"/><path d="M16.5 480 V485" stroke="#2b3f8c" stroke-width="1"/><path d="M33.4 478.8 L32.5 488.5 H42.5 L41.6 478.8 Z" fill="#ffd200" stroke="#dba400" stroke-width="1"/><path d="M35.2 480.6 V477.6 Q35.2 475.6 37.5 475.6 Q39.8 475.6 39.8 477.6 V480.6" fill="none" stroke="#dba400" stroke-width="1.1"/></svg>
<div style="left:4px;top:483px;width:514px;height:23px;background:#f0f0f0;"></div>
<div style="left:4px;top:483px;width:514px;height:1px;background:#000000;"></div>
<div style="left:6px;top:483px;width:60px;height:20px;background:#ffffff;border:1px solid #000;border-top:none;box-sizing:border-box;box-shadow:1px 1px 0 #8a8a8a;"></div>
<span class="t" style="left:16px;top:485.44px;font-size:12px;line-height:16px;color:#000;letter-spacing:0.133px;">Общие</span>
<span class="t" style="left:76px;top:485.44px;font-size:12px;line-height:16px;color:#7d7d7d;letter-spacing:0.021px;">Избранное</span>
<div style="left:0px;top:506px;width:518px;height:3px;background:#fbfbfb;"></div>
<div style="left:0px;top:75px;width:521px;height:2px;background:#ffffff;"></div>
<div style="left:518px;top:75px;width:3px;height:434px;background:#fcfcfc;"></div>
<div style="left:0px;top:509px;width:522px;height:1px;background:#a0a0a0;"></div>
<div style="left:521px;top:75px;width:1px;height:435px;background:#a0a0a0;"></div>
<div style="left:522px;top:75px;width:1px;height:434px;background:#696969;"></div>
<div style="left:523px;top:76px;width:1395px;height:412px;background:#000000;"></div>
<div style="left:522px;top:75px;width:1398px;height:1px;background:#696969;"></div>
<svg style="left:0px;top:0px;shape-rendering:crispEdges;" width="1920" height="490" viewBox="0 0 1920 490"><path d="M557.5 78V467M589.5 78V467M621.5 78V467M653.5 78V467M685.5 78V467M717.5 78V467M749.5 78V467M781.5 78V467M813.5 78V467M845.5 78V467M877.5 78V467M909.5 78V467M941.5 78V467M973.5 78V467M1005.5 78V467M1037.5 78V467M1069.5 78V467M1101.5 78V467M1133.5 78V467M1165.5 78V467M1197.5 78V467M1229.5 78V467M1261.5 78V467M1293.5 78V467M1325.5 78V467M1357.5 78V467M1389.5 78V467M1421.5 78V467M1453.5 78V467M1485.5 78V467M1517.5 78V467M1549.5 78V467M1581.5 78V467M1613.5 78V467M1645.5 78V467M1677.5 78V467M1709.5 78V467M1741.5 78V467M1773.5 78V467M1805.5 78V467M1837.5 78V467" stroke="#8497ae" stroke-width="1" stroke-dasharray="3 3" fill="none"/><rect x="525" y="141" width="1341" height="1" fill="#000"/><rect x="525" y="247" width="1341" height="1" fill="#000"/><path d="M525 108.5H1865" stroke="#8497ae" stroke-width="1" stroke-dasharray="3 3" fill="none"/><path d="M526 115.5H1865" stroke="#8497ae" stroke-width="1" fill="none"/><path d="M526 140 L526 137.6 L528 137.6 L528 138.4 L530 138.4 L530 138.6 L532 138.6 L532 138.4 L534 138.4 L534 138.4 L536 138.4 L536 138.4 L538 138.4 L538 138.3 L540 138.3 L540 138.4 L542 138.4 L542 138.4 L544 138.4 L544 137.8 L546 137.8 L546 137.6 L548 137.6 L548 138.4 L550 138.4 L550 138.1 L552 138.1 L552 137.9 L554 137.9 L554 137.4 L556 137.4 L556 137.3 L558 137.3 L558 136.8 L560 136.8 L560 137.6 L562 137.6 L562 138.6 L564 138.6 L564 138.3 L566 138.3 L566 137.6 L568 137.6 L568 137.4 L570 137.4 L570 136.8 L572 136.8 L572 136.5 L574 136.5 L574 136.2 L576 136.2 L576 136.7 L578 136.7 L578 137.6 L580 137.6 L580 138.4 L582 138.4 L582 138.4 L584 138.4 L584 137.7 L586 137.7 L586 137.6 L588 137.6 L588 136.9 L590 136.9 L590 137.2 L592 137.2 L592 138.0 L594 138.0 L594 138.4 L596 138.4 L596 136.3 L598 136.3 L598 136.6 L600 136.6 L600 136.2 L602 136.2 L602 133.3 L604 133.3 L604 133.2 L606 133.2 L606 135.3 L608 135.3 L608 137.2 L610 137.2 L610 138.2 L612 138.2 L612 135.9 L614 135.9 L614 136.6 L616 136.6 L616 136.9 L618 136.9 L618 135.9 L620 135.9 L620 136.7 L622 136.7 L622 138.6 L624 138.6 L624 137.7 L626 137.7 L626 135.1 L628 135.1 L628 135.7 L630 135.7 L630 136.4 L632 136.4 L632 137.2 L634 137.2 L634 136.2 L636 136.2 L636 136.9 L638 136.9 L638 135.9 L640 135.9 L640 136.4 L642 136.4 L642 136.6 L644 136.6 L644 137.0 L646 137.0 L646 137.6 L648 137.6 L648 136.9 L650 136.9 L650 136.6 L652 136.6 L652 136.3 L654 136.3 L654 137.1 L656 137.1 L656 137.5 L658 137.5 L658 137.7 L660 137.7 L660 137.3 L662 137.3 L662 138.0 L664 138.0 L664 138.4 L666 138.4 L666 138.1 L668 138.1 L668 136.3 L670 136.3 L670 136.0 L672 136.0 L672 136.6 L674 136.6 L674 137.0 L676 137.0 L676 137.5 L678 137.5 L678 136.7 L680 136.7 L680 136.6 L682 136.6 L682 135.8 L684 135.8 L684 136.8 L686 136.8 L686 137.8 L688 137.8 L688 137.9 L690 137.9 L690 138.2 L692 138.2 L692 137.7 L694 137.7 L694 138.2 L696 138.2 L696 138.2 L698 138.2 L698 137.4 L700 137.4 L700 137.4 L702 137.4 L702 137.6 L704 137.6 L704 136.7 L706 136.7 L706 135.9 L708 135.9 L708 136.6 L710 136.6 L710 137.4 L712 137.4 L712 137.1 L714 137.1 L714 137.8 L716 137.8 L716 138.4 L718 138.4 L718 138.4 L720 138.4 L720 138.4 L722 138.4 L722 138.4 L724 138.4 L724 138.4 L726 138.4 L726 135.4 L728 135.4 L728 136.4 L730 136.4 L730 136.4 L732 136.4 L732 137.1 L734 137.1 L734 138.0 L736 138.0 L736 138.4 L738 138.4 L738 137.8 L740 137.8 L740 137.0 L742 137.0 L742 137.8 L744 137.8 L744 138.0 L746 138.0 L746 137.8 L748 137.8 L748 137.1 L750 137.1 L750 137.2 L752 137.2 L752 136.4 L754 136.4 L754 136.4 L756 136.4 L756 135.8 L758 135.8 L758 136.2 L760 136.2 L760 136.2 L762 136.2 L762 138.6 L764 138.6 L764 138.2 L766 138.2 L766 138.2 L768 138.2 L768 137.6 L770 137.6 L770 137.0 L772 137.0 L772 136.7 L774 136.7 L774 136.1 L776 136.1 L776 136.3 L778 136.3 L778 137.0 L780 137.0 L780 137.5 L782 137.5 L782 136.9 L784 136.9 L784 137.3 L786 137.3 L786 137.4 L788 137.4 L788 137.9 L790 137.9 L790 137.8 L792 137.8 L792 138.6 L794 138.6 L794 138.4 L796 138.4 L796 138.6 L798 138.6 L798 138.4 L800 138.4 L800 136.7 L802 136.7 L802 137.3 L804 137.3 L804 136.8 L806 136.8 L806 136.1 L808 136.1 L808 135.2 L810 135.2 L810 136.1 L812 136.1 L812 135.9 L814 135.9 L814 135.8 L816 135.8 L816 135.2 L818 135.2 L818 136.2 L820 136.2 L820 136.5 L822 136.5 L822 136.4 L824 136.4 L824 138.6 L826 138.6 L826 138.0 L828 138.0 L828 138.0 L830 138.0 L830 137.6 L832 137.6 L832 138.0 L834 138.0 L834 137.6 L836 137.6 L836 137.9 L838 137.9 L838 137.4 L840 137.4 L840 138.2 L842 138.2 L842 137.8 L844 137.8 L844 138.4 L846 138.4 L846 138.1 L848 138.1 L848 138.4 L850 138.4 L850 138.4 L852 138.4 L852 138.4 L854 138.4 L854 138.4 L856 138.4 L856 137.5 L858 137.5 L858 138.1 L860 138.1 L860 138.0 L862 138.0 L862 137.1 L864 137.1 L864 137.1 L866 137.1 L866 137.7 L868 137.7 L868 136.0 L870 136.0 L870 136.1 L872 136.1 L872 136.5 L874 136.5 L874 137.5 L876 137.5 L876 138.2 L878 138.2 L878 137.5 L880 137.5 L880 137.7 L882 137.7 L882 138.0 L884 138.0 L884 138.4 L886 138.4 L886 138.4 L888 138.4 L888 138.4 L890 138.4 L890 138.4 L892 138.4 L892 137.8 L894 137.8 L894 137.0 L896 137.0 L896 137.9 L898 137.9 L898 137.4 L900 137.4 L900 138.3 L902 138.3 L902 138.4 L904 138.4 L904 138.0 L906 138.0 L906 137.7 L908 137.7 L908 137.9 L910 137.9 L910 138.4 L912 138.4 L912 138.4 L914 138.4 L914 138.4 L916 138.4 L916 138.4 L918 138.4 L918 138.4 L920 138.4 L920 137.7 L922 137.7 L922 137.9 L924 137.9 L924 138.2 L926 138.2 L926 137.3 L928 137.3 L928 137.1 L930 137.1 L930 137.6 L932 137.6 L932 137.7 L934 137.7 L934 135.7 L936 135.7 L936 138.6 L938 138.6 L938 138.4 L940 138.4 L940 137.7 L942 137.7 L942 138.4 L944 138.4 L944 138.1 L946 138.1 L946 137.8 L948 137.8 L948 135.1 L950 135.1 L950 135.6 L952 135.6 L952 136.1 L954 136.1 L954 136.9 L956 136.9 L956 136.8 L958 136.8 L958 135.3 L960 135.3 L960 134.5 L962 134.5 L962 135.0 L964 135.0 L964 133.2 L966 133.2 L966 133.4 L968 133.4 L968 134.5 L970 134.5 L970 134.2 L972 134.2 L972 134.2 L974 134.2 L974 134.9 L976 134.9 L976 135.3 L978 135.3 L978 135.9 L980 135.9 L980 136.6 L982 136.6 L982 137.0 L984 137.0 L984 137.2 L986 137.2 L986 136.8 L988 136.8 L988 137.2 L990 137.2 L990 134.1 L992 134.1 L992 138.6 L994 138.6 L994 138.4 L996 138.4 L996 138.4 L998 138.4 L998 138.4 L1000 138.4 L1000 136.0 L1002 136.0 L1002 135.2 L1004 135.2 L1004 136.1 L1006 136.1 L1006 134.5 L1008 134.5 L1008 133.7 L1010 133.7 L1010 134.0 L1012 134.0 L1012 135.8 L1014 135.8 L1014 136.8 L1016 136.8 L1016 138.6 L1018 138.6 L1018 138.4 L1020 138.4 L1020 137.5 L1022 137.5 L1022 137.7 L1024 137.7 L1024 138.3 L1026 138.3 L1026 137.7 L1028 137.7 L1028 138.1 L1030 138.1 L1030 137.6 L1032 137.6 L1032 137.1 L1034 137.1 L1034 138.0 L1036 138.0 L1036 137.1 L1038 137.1 L1038 137.6 L1040 137.6 L1040 137.6 L1042 137.6 L1042 138.2 L1044 138.2 L1044 137.9 L1046 137.9 L1046 137.6 L1048 137.6 L1048 138.0 L1050 138.0 L1050 137.6 L1052 137.6 L1052 138.1 L1054 138.1 L1054 138.0 L1056 138.0 L1056 137.0 L1058 137.0 L1058 136.4 L1060 136.4 L1060 137.2 L1062 137.2 L1062 136.6 L1064 136.6 L1064 137.0 L1066 137.0 L1066 136.1 L1068 136.1 L1068 136.4 L1070 136.4 L1070 136.9 L1072 136.9 L1072 137.7 L1074 137.7 L1074 138.3 L1076 138.3 L1076 138.4 L1078 138.4 L1078 138.6 L1080 138.6 L1080 138.4 L1082 138.4 L1082 138.4 L1084 138.4 L1084 138.3 L1086 138.3 L1086 138.4 L1088 138.4 L1088 138.4 L1090 138.4 L1090 138.4 L1092 138.4 L1092 137.5 L1094 137.5 L1094 137.8 L1096 137.8 L1096 136.9 L1098 136.9 L1098 138.6 L1100 138.6 L1100 137.8 L1102 137.8 L1102 138.0 L1104 138.0 L1104 136.1 L1106 136.1 L1106 137.2 L1108 137.2 L1108 137.5 L1110 137.5 L1110 137.9 L1112 137.9 L1112 138.4 L1114 138.4 L1114 137.5 L1116 137.5 L1116 136.7 L1118 136.7 L1118 137.6 L1120 137.6 L1120 136.8 L1122 136.8 L1122 137.5 L1124 137.5 L1124 137.7 L1126 137.7 L1126 138.4 L1128 138.4 L1128 138.3 L1130 138.3 L1130 138.4 L1132 138.4 L1132 138.4 L1134 138.4 L1134 138.4 L1136 138.4 L1136 138.2 L1138 138.2 L1138 138.4 L1140 138.4 L1140 138.4 L1142 138.4 L1142 135.9 L1144 135.9 L1144 136.5 L1146 136.5 L1146 136.6 L1148 136.6 L1148 137.4 L1150 137.4 L1150 138.2 L1152 138.2 L1152 138.4 L1154 138.4 L1154 138.0 L1156 138.0 L1156 138.4 L1158 138.4 L1158 137.5 L1160 137.5 L1160 136.6 L1162 136.6 L1162 137.2 L1164 137.2 L1164 136.4 L1166 136.4 L1166 137.1 L1168 137.1 L1168 136.6 L1170 136.6 L1170 137.1 L1172 137.1 L1172 137.1 L1174 137.1 L1174 137.6 L1176 137.6 L1176 138.4 L1178 138.4 L1178 137.6 L1180 137.6 L1180 138.2 L1182 138.2 L1182 138.2 L1184 138.2 L1184 137.5 L1186 137.5 L1186 136.8 L1188 136.8 L1188 136.6 L1190 136.6 L1190 137.0 L1192 137.0 L1192 137.3 L1194 137.3 L1194 138.0 L1196 138.0 L1196 137.4 L1198 137.4 L1198 136.5 L1200 136.5 L1200 135.6 L1202 135.6 L1202 135.4 L1204 135.4 L1204 136.1 L1206 136.1 L1206 134.5 L1208 134.5 L1208 134.8 L1210 134.8 L1210 135.4 L1212 135.4 L1212 135.8 L1214 135.8 L1214 135.6 L1216 135.6 L1216 133.5 L1218 133.5 L1218 133.8 L1220 133.8 L1220 133.4 L1222 133.4 L1222 134.6 L1224 134.6 L1224 133.2 L1226 133.2 L1226 133.9 L1228 133.9 L1228 135.0 L1230 135.0 L1230 133.2 L1232 133.2 L1232 133.2 L1234 133.2 L1234 133.3 L1236 133.3 L1236 135.4 L1238 135.4 L1238 134.9 L1240 134.9 L1240 135.4 L1242 135.4 L1242 135.4 L1244 135.4 L1244 137.3 L1246 137.3 L1246 137.8 L1248 137.8 L1248 137.3 L1250 137.3 L1250 137.7 L1252 137.7 L1252 137.5 L1254 137.5 L1254 136.6 L1256 136.6 L1256 136.2 L1258 136.2 L1258 137.1 L1260 137.1 L1260 136.9 L1262 136.9 L1262 136.3 L1264 136.3 L1264 138.6 L1266 138.6 L1266 138.4 L1268 138.4 L1268 138.0 L1270 138.0 L1270 137.9 L1272 137.9 L1272 137.3 L1274 137.3 L1274 136.6 L1276 136.6 L1276 137.4 L1278 137.4 L1278 138.3 L1280 138.3 L1280 138.1 L1282 138.1 L1282 138.4 L1284 138.4 L1284 137.9 L1286 137.9 L1286 136.8 L1288 136.8 L1288 136.4 L1290 136.4 L1290 135.5 L1292 135.5 L1292 136.5 L1294 136.5 L1294 136.0 L1296 136.0 L1296 136.5 L1298 136.5 L1298 137.2 L1300 137.2 L1300 138.6 L1302 138.6 L1302 138.4 L1304 138.4 L1304 138.4 L1306 138.4 L1306 137.8 L1308 137.8 L1308 138.2 L1310 138.2 L1310 138.3 L1312 138.3 L1312 138.4 L1314 138.4 L1314 137.9 L1316 137.9 L1316 138.1 L1318 138.1 L1318 138.6 L1320 138.6 L1320 138.4 L1322 138.4 L1322 138.4 L1324 138.4 L1324 138.4 L1326 138.4 L1326 137.9 L1328 137.9 L1328 138.2 L1330 138.2 L1330 137.6 L1332 137.6 L1332 138.3 L1334 138.3 L1334 138.1 L1336 138.1 L1336 137.4 L1338 137.4 L1338 137.8 L1340 137.8 L1340 138.4 L1342 138.4 L1342 138.4 L1344 138.4 L1344 138.4 L1346 138.4 L1346 138.0 L1348 138.0 L1348 138.4 L1350 138.4 L1350 137.8 L1352 137.8 L1352 138.4 L1354 138.4 L1354 138.6 L1356 138.6 L1356 138.4 L1358 138.4 L1358 138.4 L1360 138.4 L1360 138.4 L1362 138.4 L1362 138.0 L1364 138.0 L1364 137.8 L1366 137.8 L1366 138.4 L1368 138.4 L1368 137.9 L1370 137.9 L1370 137.6 L1372 137.6 L1372 137.9 L1374 137.9 L1374 138.1 L1376 138.1 L1376 137.9 L1378 137.9 L1378 138.0 L1380 138.0 L1380 137.7 L1382 137.7 L1382 137.4 L1384 137.4 L1384 138.6 L1386 138.6 L1386 138.4 L1388 138.4 L1388 137.6 L1390 137.6 L1390 137.4 L1392 137.4 L1392 137.4 L1394 137.4 L1394 137.4 L1396 137.4 L1396 138.0 L1398 138.0 L1398 137.5 L1400 137.5 L1400 137.8 L1402 137.8 L1402 135.5 L1404 135.5 L1404 136.4 L1406 136.4 L1406 136.0 L1408 136.0 L1408 136.7 L1410 136.7 L1410 136.2 L1412 136.2 L1412 136.3 L1414 136.3 L1414 135.4 L1416 135.4 L1416 136.1 L1418 136.1 L1418 136.8 L1420 136.8 L1420 136.2 L1422 136.2 L1422 136.7 L1424 136.7 L1424 137.7 L1426 137.7 L1426 138.2 L1428 138.2 L1428 138.4 L1430 138.4 L1430 138.4 L1432 138.4 L1432 138.4 L1434 138.4 L1434 137.9 L1436 137.9 L1436 136.3 L1438 136.3 L1438 136.1 L1440 136.1 L1440 136.8 L1442 136.8 L1442 137.1 L1444 137.1 L1444 136.6 L1446 136.6 L1446 136.4 L1448 136.4 L1448 135.6 L1450 135.6 L1450 135.3 L1452 135.3 L1452 135.9 L1454 135.9 L1454 136.6 L1456 136.6 L1456 136.7 L1458 136.7 L1458 136.7 L1460 136.7 L1460 137.7 L1462 137.7 L1462 137.6 L1464 137.6 L1464 137.9 L1466 137.9 L1466 138.4 L1468 138.4 L1468 138.4 L1470 138.4 L1470 137.6 L1472 137.6 L1472 137.6 L1474 137.6 L1474 138.4 L1476 138.4 L1476 138.4 L1478 138.4 L1478 138.4 L1480 138.4 L1480 138.4 L1482 138.4 L1482 138.3 L1484 138.3 L1484 137.7 L1486 137.7 L1486 138.2 L1488 138.2 L1488 137.9 L1490 137.9 L1490 138.3 L1492 138.3 L1492 138.0 L1494 138.0 L1494 137.6 L1496 137.6 L1496 138.6 L1498 138.6 L1498 138.4 L1500 138.4 L1500 138.1 L1502 138.1 L1502 137.9 L1504 137.9 L1504 137.6 L1506 137.6 L1506 138.2 L1508 138.2 L1508 137.7 L1510 137.7 L1510 138.4 L1512 138.4 L1512 138.1 L1514 138.1 L1514 137.6 L1516 137.6 L1516 138.0 L1518 138.0 L1518 138.2 L1520 138.2 L1520 138.6 L1522 138.6 L1522 138.4 L1524 138.4 L1524 138.6 L1526 138.6 L1526 138.4 L1528 138.4 L1528 137.5 L1530 137.5 L1530 138.3 L1532 138.3 L1532 138.6 L1534 138.6 L1534 138.3 L1536 138.3 L1536 138.4 L1538 138.4 L1538 138.4 L1540 138.4 L1540 138.0 L1542 138.0 L1542 137.5 L1544 137.5 L1544 137.0 L1546 137.0 L1546 136.7 L1548 136.7 L1548 137.2 L1550 137.2 L1550 135.5 L1552 135.5 L1552 136.4 L1554 136.4 L1554 137.1 L1556 137.1 L1556 137.9 L1558 137.9 L1558 138.1 L1560 138.1 L1560 137.5 L1562 137.5 L1562 137.3 L1564 137.3 L1564 136.8 L1566 136.8 L1566 136.7 L1568 136.7 L1568 135.8 L1570 135.8 L1570 135.6 L1572 135.6 L1572 136.0 L1574 136.0 L1574 135.6 L1576 135.6 L1576 134.8 L1578 134.8 L1578 134.7 L1580 134.7 L1580 134.0 L1582 134.0 L1582 134.5 L1584 134.5 L1584 135.0 L1586 135.0 L1586 134.5 L1588 134.5 L1588 135.0 L1590 135.0 L1590 135.6 L1592 135.6 L1592 135.7 L1594 135.7 L1594 136.2 L1596 136.2 L1596 135.5 L1598 135.5 L1598 136.2 L1600 136.2 L1599 140 Z" fill="#32cd32" stroke="none"/><path d="M525.6 102.5 L527.3 102.6 L529.0 102.9 L530.7 103.0 L532.2 105.2 L534.4 101.5 L536.6 110.3 L538.0 110.8 L539.5 110.0 L541.0 109.9 L542.4 109.8 L543.8 109.2 L545.3 108.4 L546.9 107.5 L548.6 107.5 L550.2 107.2 L551.9 106.6 L553.6 107.8 L555.3 107.5 L557.0 108.8 L558.5 109.5 L559.9 110.1 L561.4 112.1 L562.8 112.9 L564.3 113.6 L565.8 112.0 L567.2 111.7 L568.7 113.2 L570.1 113.9 L571.6 114.2 L573.0 114.8 L574.5 115.4 L576.0 114.2 L577.4 113.2 L578.8 113.3 L580.3 112.5 L581.8 110.3 L583.2 108.9 L584.7 107.5 L586.2 106.3 L587.7 106.0 L589.1 107.1 L590.5 107.6 L592.0 108.1 L593.8 110.3 L595.6 111.4 L597.5 110.4 L599.3 109.3 L600.8 109.5 L602.2 109.3 L603.7 109.3 L605.2 108.9 L606.6 107.9 L608.1 106.9 L609.5 107.3 L611.0 105.9 L612.4 107.3 L613.9 107.7 L615.3 107.8 L616.8 107.6 L618.2 106.6 L619.7 106.0 L621.2 105.9 L622.9 106.1 L624.7 106.3 L626.4 107.8 L628.2 107.8 L629.9 108.4 L631.4 107.9 L632.8 106.2 L634.3 106.1 L635.8 104.4 L637.2 104.8 L638.7 103.4 L640.1 103.5 L641.6 104.5 L643.0 103.7 L644.9 104.4 L646.7 105.2 L648.4 104.5 L650.1 102.1 L651.8 100.8 L653.2 100.5 L654.7 101.6 L656.1 102.1 L657.6 101.7 L659.0 102.3 L660.8 102.0 L662.5 102.6 L664.3 103.8 L666.0 103.8 L667.8 103.7 L669.3 103.8 L670.8 104.6 L672.2 105.1 L673.7 106.3 L675.2 104.8 L676.6 105.1 L678.0 103.3 L679.5 103.0 L681.0 102.6 L682.4 101.9 L683.9 101.0 L685.3 101.3 L686.8 100.5 L688.5 99.9 L690.2 100.6 L691.9 99.7 L693.6 100.1 L695.3 99.7 L697.0 100.1 L699.2 101.1 L700.8 99.7 L702.4 99.6 L703.9 98.3 L705.5 96.7 L706.8 97.7 L708.0 99.3 L709.8 99.0 L711.6 97.6 L713.0 98.6 L714.5 100.3 L716.0 102.5 L717.4 103.4 L718.9 103.1 L720.3 101.9 L721.8 102.7 L723.3 101.5 L724.7 101.4 L726.1 101.9 L727.6 103.0 L729.0 103.0 L730.8 102.0 L732.5 101.2 L734.3 100.1 L736.0 99.4 L737.8 99.3 L739.3 100.0 L740.7 100.1 L742.2 101.1 L743.9 100.3 L745.6 99.0 L747.3 98.2 L748.9 99.1 L750.6 100.8 L752.2 101.0 L753.9 102.0 L755.6 102.3 L757.3 103.0 L759.0 102.2 L760.7 102.4 L762.4 103.8 L764.1 103.4 L765.6 104.1 L767.0 103.4 L768.5 103.5 L769.9 104.6 L771.4 104.4 L773.2 106.6 L775.0 107.4 L776.6 106.9 L778.2 108.1 L779.8 108.0 L781.3 107.6 L782.9 107.3 L784.5 107.4 L786.2 106.4 L787.9 106.0 L789.6 107.0 L791.3 105.5 L793.0 105.9 L794.7 105.2 L796.2 104.5 L797.6 105.0 L799.1 104.3 L800.5 103.5 L802.0 103.4 L803.5 102.8 L804.9 103.5 L806.4 103.0 L807.9 102.9 L809.3 103.7 L810.8 104.7 L812.2 105.2 L813.8 105.1 L815.4 104.1 L817.0 103.0 L818.5 103.4 L820.1 101.7 L821.7 101.5 L823.2 102.7 L824.6 105.1 L826.0 107.3 L827.5 109.3 L829.0 106.2 L830.4 104.4 L832.0 103.7 L833.6 103.9 L835.1 104.0 L836.7 103.2 L838.3 103.4 L839.9 103.4 L841.4 104.0 L842.8 104.1 L844.3 103.6 L845.8 103.7 L847.2 103.5 L848.7 103.4 L850.1 104.9 L851.6 106.8 L853.0 109.5 L854.7 107.1 L856.4 106.7 L858.1 104.4 L859.5 106.2 L861.0 107.4 L862.5 107.1 L863.9 104.7 L865.4 104.4 L867.1 105.8 L868.8 106.8 L870.5 108.1 L871.9 109.2 L873.2 109.3 L874.6 110.3 L876.2 109.3 L877.8 106.9 L879.3 106.4 L880.8 107.2 L882.2 107.6 L883.7 107.4 L885.2 106.4 L886.6 104.5 L888.1 102.8 L889.5 101.4 L891.0 99.3 L892.5 101.0 L893.9 101.3 L895.3 102.9 L896.8 103.7 L898.5 105.0 L900.3 105.7 L902.0 105.8 L903.8 107.1 L905.5 107.4 L907.0 107.5 L908.4 106.6 L909.9 106.3 L911.3 105.5 L912.8 105.2 L914.5 104.4 L916.2 103.4 L917.9 102.3 L919.6 103.1 L921.3 105.4 L923.0 106.6 L924.5 107.4 L926.0 107.3 L927.4 107.2 L928.9 106.9 L930.4 106.4 L931.8 106.6 L933.3 106.0 L934.7 105.5 L936.2 105.2 L938.4 98.6 L940.0 97.6 L941.6 95.1 L943.2 94.6 L944.8 92.1 L946.4 91.3 L947.9 92.2 L949.3 92.7 L950.8 93.1 L952.2 94.2 L954.4 91.3 L956.2 93.8 L958.0 95.7 L959.5 93.9 L960.9 92.3 L962.4 90.3 L963.8 92.2 L965.1 92.5 L966.5 94.2 L968.3 103.0 L969.8 105.0 L971.2 108.4 L972.7 107.1 L974.1 106.3 L975.5 107.1 L977.0 107.4 L978.6 106.0 L980.3 104.9 L982.0 105.0 L983.6 103.4 L985.0 104.9 L986.5 105.9 L988.1 104.7 L989.8 104.3 L991.4 102.3 L993.0 101.5 L994.5 101.7 L995.9 100.9 L997.4 101.2 L998.8 101.6 L1000.3 101.1 L1001.8 100.8 L1003.2 99.3 L1004.7 101.0 L1006.1 101.3 L1007.5 102.7 L1009.0 103.7 L1010.7 101.7 L1012.5 99.8 L1014.2 98.6 L1016.0 101.0 L1017.8 103.4 L1019.3 103.4 L1020.8 103.0 L1022.2 102.3 L1023.7 101.5 L1025.2 102.1 L1026.6 101.0 L1028.1 100.8 L1029.5 101.1 L1031.0 101.1 L1032.5 101.1 L1033.9 101.3 L1035.3 101.9 L1036.8 102.3 L1038.2 103.2 L1039.7 103.7 L1041.1 104.2 L1042.6 105.2 L1044.1 105.8 L1045.5 106.2 L1047.0 105.5 L1048.4 105.1 L1049.9 105.9 L1051.3 104.1 L1052.8 103.7 L1054.6 104.0 L1056.3 102.5 L1058.1 103.3 L1059.8 102.8 L1061.6 102.5 L1063.3 102.2 L1065.0 102.9 L1066.7 101.7 L1068.4 101.8 L1070.1 102.3 L1071.8 102.3 L1073.5 101.9 L1075.1 103.5 L1076.8 103.0 L1078.4 103.7 L1080.2 102.1 L1082.0 101.5 L1083.5 101.5 L1084.9 103.0 L1086.4 103.4 L1087.9 102.4 L1089.3 101.7 L1090.8 100.5 L1092.6 101.2 L1094.4 101.5 L1096.6 97.9 L1098.0 99.5 L1099.5 100.9 L1101.0 101.6 L1102.4 102.5 L1103.9 101.8 L1105.3 102.0 L1106.8 101.3 L1108.3 101.5 L1110.1 98.4 L1111.9 96.7 L1113.3 98.0 L1114.8 99.3 L1116.3 98.8 L1117.7 97.1 L1119.2 96.7 L1120.8 96.5 L1122.4 96.7 L1124.0 97.1 L1125.8 103.7 L1127.2 103.3 L1128.7 102.4 L1130.1 101.9 L1131.6 101.1 L1133.0 100.4 L1134.5 99.0 L1136.2 99.5 L1137.9 100.8 L1139.6 101.1 L1141.3 101.0 L1143.0 99.1 L1144.7 99.0 L1146.2 100.1 L1147.6 100.2 L1149.0 99.8 L1150.5 100.8 L1152.0 101.9 L1153.4 103.4 L1154.9 104.4 L1156.4 106.7 L1157.8 107.6 L1159.3 109.5 L1160.8 109.0 L1162.2 108.8 L1163.6 108.0 L1165.1 106.9 L1166.5 107.8 L1168.0 107.4 L1169.5 105.8 L1171.0 104.4 L1172.5 105.0 L1173.9 104.7 L1175.3 105.9 L1176.8 105.9 L1178.5 107.1 L1180.2 107.6 L1181.9 108.1 L1183.6 107.7 L1185.3 106.2 L1187.0 105.9 L1188.8 107.2 L1190.6 107.4 L1192.1 106.6 L1193.5 105.2 L1195.0 103.0 L1196.5 101.5 L1198.2 102.3 L1199.9 101.9 L1201.6 102.5 L1203.0 103.7 L1204.5 103.7 L1206.3 104.8 L1208.1 104.9 L1210.3 101.5 L1211.8 100.4 L1213.2 99.2 L1214.7 99.0 L1216.2 99.2 L1217.6 99.6 L1219.0 100.2 L1220.5 100.1 L1222.0 99.9 L1223.5 99.0 L1224.9 100.0 L1226.4 99.3 L1227.8 101.6 L1229.3 105.2 L1231.1 112.5 L1232.9 119.0 L1234.8 115.3 L1236.6 112.5 L1238.1 112.6 L1239.5 113.7 L1241.0 113.6 L1242.5 114.6 L1243.9 116.2 L1245.3 118.3 L1246.8 119.8 L1248.5 121.3 L1250.2 122.7 L1251.9 123.4 L1253.3 122.4 L1254.8 120.9 L1256.7 117.4 L1258.5 112.5 L1259.9 113.4 L1261.4 114.9 L1262.8 115.1 L1264.5 114.1 L1266.2 113.9 L1267.9 113.9 L1269.6 114.5 L1271.2 114.7 L1272.8 115.9 L1274.5 116.1 L1276.3 115.9 L1278.0 115.4 L1279.8 115.5 L1281.5 114.7 L1283.3 114.2 L1284.7 113.2 L1286.2 112.6 L1287.6 112.6 L1289.1 112.0 L1290.5 110.7 L1292.7 114.2 L1294.3 114.2 L1296.0 115.7 L1297.7 116.3 L1299.3 116.1 L1301.0 117.1 L1302.7 118.1 L1304.4 119.0 L1306.1 117.6 L1307.8 117.1 L1309.5 116.1 L1311.0 115.6 L1312.4 115.3 L1313.8 114.0 L1315.3 114.2 L1316.8 115.3 L1318.2 115.0 L1319.7 115.2 L1321.2 115.7 L1322.6 117.6 L1324.1 118.7 L1325.5 120.0 L1327.0 119.4 L1328.4 119.2 L1329.9 118.3 L1331.6 118.2 L1333.2 119.5 L1334.8 119.8 L1336.5 120.5 L1338.3 120.7 L1340.1 119.5 L1341.6 121.1 L1343.0 121.1 L1344.5 122.4 L1346.3 121.6 L1348.2 120.9 L1350.0 111.3 L1351.8 113.6 L1354.0 118.3 L1355.5 118.6 L1356.9 120.0 L1358.6 118.6 L1360.3 117.9 L1362.0 116.1 L1363.5 115.8 L1364.9 114.3 L1366.3 113.1 L1367.8 112.5 L1369.3 113.3 L1370.8 115.1 L1372.2 114.8 L1373.7 114.7 L1375.1 113.6 L1376.6 114.0 L1378.0 116.0 L1379.5 116.5 L1381.3 114.6 L1383.1 114.2 L1384.6 108.3 L1386.1 103.4 L1387.9 101.8 L1389.7 101.1 L1391.4 102.1 L1393.1 102.4 L1394.8 103.4 L1396.5 102.0 L1398.1 101.2 L1399.8 99.2 L1401.4 98.6 L1403.1 99.2 L1404.9 98.6 L1406.6 99.5 L1408.4 99.4 L1410.1 100.1 L1411.6 99.0 L1413.0 98.9 L1414.5 98.2 L1416.0 99.1 L1417.4 100.1 L1418.8 101.1 L1420.3 102.3 L1421.8 103.5 L1423.2 104.2 L1424.7 105.9 L1426.2 111.7 L1428.0 110.6 L1429.8 110.3 L1431.7 111.9 L1433.5 113.2 L1435.2 112.6 L1436.9 111.6 L1438.6 110.7 L1440.2 111.9 L1441.8 112.1 L1443.4 113.2 L1445.0 112.9 L1446.6 113.9 L1448.1 116.5 L1449.5 118.8 L1451.0 120.5 L1452.5 120.1 L1453.9 118.2 L1455.3 117.2 L1456.8 116.5 L1458.3 117.0 L1459.7 115.8 L1461.2 116.8 L1462.6 116.4 L1464.1 115.7 L1465.9 116.5 L1467.7 118.3 L1469.4 117.0 L1471.1 116.9 L1472.8 115.7 L1474.3 116.9 L1475.7 118.3 L1477.2 120.5 L1478.7 120.6 L1480.1 119.8 L1481.8 121.4 L1483.5 123.6 L1485.2 124.9 L1487.1 123.8 L1488.9 123.8 L1490.7 122.2 L1492.6 121.2 L1494.4 119.5 L1495.9 127.3 L1497.4 125.1 L1499.0 124.0 L1500.5 123.2 L1502.0 121.5 L1503.5 121.7 L1504.9 121.5 L1506.3 119.8 L1507.8 120.0 L1509.3 121.2 L1510.8 122.4 L1512.6 120.6 L1514.4 118.0 L1515.9 111.7 L1517.6 110.7 L1519.3 110.0 L1521.0 108.8 L1522.5 108.1 L1523.9 107.8 L1525.4 107.6 L1526.8 107.3 L1528.3 107.8 L1530.1 110.1 L1531.9 112.2 L1533.6 112.4 L1535.2 112.6 L1536.8 112.1 L1538.5 112.8 L1540.0 111.6 L1541.4 111.3 L1543.2 112.5 L1545.0 114.6 L1547.2 113.6 L1548.7 114.8 L1550.1 115.8 L1551.5 116.4 L1553.0 116.5 L1554.5 115.3 L1556.0 114.7 L1557.4 115.5 L1558.9 114.2 L1560.6 113.6 L1562.3 113.5 L1564.0 112.5 L1565.5 113.3 L1566.9 114.6 L1568.4 113.6 L1569.8 112.7 L1571.3 111.7 L1573.1 112.5 L1574.9 113.6 L1576.3 112.8 L1577.8 111.7 L1579.3 112.1 L1580.8 113.9 L1582.6 113.7 L1584.4 112.8 L1585.8 112.1 L1587.1 110.0 L1588.5 109.3 L1590.5 111.7 L1592.4 114.2 L1593.8 114.8 L1595.3 114.6 L1596.8 114.9 L1598.3 115.4" stroke="#00ff00" stroke-width="1.15" fill="none" stroke-linejoin="round"/><rect x="525.5" y="78.5" width="1340" height="62" fill="none" stroke="#ffffff" stroke-width="1"/><rect x="525.5" y="142.5" width="1340" height="104" fill="none" stroke="#ffffff" stroke-width="1"/><rect x="525.5" y="248.5" width="1340" height="219" fill="none" stroke="#ffffff" stroke-width="1"/><path d="M1592 78.5 H1603.5 L1597.7 84.5 Z" fill="#8497ae"/><path d="M525.5 467V472M589.5 467V472M653.5 467V472M717.5 467V472M781.5 467V472M845.5 467V472M909.5 467V472M973.5 467V472M1037.5 467V472M1101.5 467V472M1165.5 467V472M1229.5 467V472M1293.5 467V472M1357.5 467V472M1421.5 467V472M1485.5 467V472M1549.5 467V472" stroke="#ffffff" stroke-width="1" fill="none"/><path d="M1865 108.5H1870" stroke="#ffffff" stroke-width="1"/><rect x="530" y="84" width="15" height="11" fill="#ffffff"/><rect x="531" y="85" width="6" height="9" fill="#fff3ef"/><rect x="538" y="85" width="6" height="9" fill="#e6f3ff"/><path d="M537.5 84.5H530.5V94.5H537.5" fill="none" stroke="#e03a2f" stroke-width="1"/><path d="M537.5 84.5H544.5V94.5H537.5" fill="none" stroke="#1464a5" stroke-width="1"/><path d="M532 86.5H537M532 89.5H537M532 92.5H537" stroke="#e03a2f" stroke-width="1"/><path d="M538 86.5H543M538 89.5H543M538 92.5H543" stroke="#1464a5" stroke-width="1"/><path d="M551.5 84.5 H554.5 V88.5 H557.5 V94.5 H551.5 Z" fill="#ffe0d8" stroke="#e03a2f" stroke-width="1"/><path d="M565.5 84.5 H562.5 V88.5 H559.5 V94.5 H565.5 Z" fill="#cfe8ff" stroke="#1464a5" stroke-width="1"/><rect x="556" y="84" width="5" height="3" fill="#ffffff"/><rect x="556.5" y="84.5" width="4" height="2" fill="#f4f4f4" stroke="#9a9a9a" stroke-width="1"/></svg>
<span class="t" style="left:571.6px;top:82.79px;font-size:10.67px;line-height:14.67px;color:#fff;transform-origin:0 0;transform:scaleX(0.9173);">AUDCAD,</span>
<span class="t" style="left:619.7px;top:82.79px;font-size:10.67px;line-height:14.67px;color:#fff;transform-origin:0 0;transform:scaleX(0.9071);">M30:</span>
<span class="t" style="left:646.8000000000001px;top:82.79px;font-size:10.67px;line-height:14.67px;color:#fff;transform-origin:0 0;transform:scaleX(0.8652);">Australian</span>
<span class="t" style="left:690.6px;top:82.79px;font-size:10.67px;line-height:14.67px;color:#fff;transform-origin:0 0;transform:scaleX(0.8691);">Dollar</span>
<span class="t" style="left:717.8000000000001px;top:82.79px;font-size:10.67px;line-height:14.67px;color:#fff;transform-origin:0 0;transform:scaleX(0.8821);">vs</span>
<span class="t" style="left:730.5px;top:82.79px;font-size:10.67px;line-height:14.67px;color:#fff;transform-origin:0 0;transform:scaleX(0.8395);">Canadian</span>
<span class="t" style="left:771.8000000000001px;top:82.79px;font-size:10.67px;line-height:14.67px;color:#fff;transform-origin:0 0;transform:scaleX(0.9122);">Dollar</span>
<span class="t" style="left:524.7px;top:469.29px;font-size:10.67px;line-height:14.67px;color:#fff;letter-spacing:0.441px;">13</span>
<span class="t" style="left:538.5px;top:469.29px;font-size:10.67px;line-height:14.67px;color:#fff;transform-origin:0 0;transform:scaleX(0.8706);">Nov</span>
<span class="t" style="left:559.2px;top:469.29px;font-size:10.67px;line-height:14.67px;color:#fff;transform-origin:0 0;transform:scaleX(0.8559);">2024</span>
<span class="t" style="left:588.7px;top:469.29px;font-size:10.67px;line-height:14.67px;color:#fff;letter-spacing:0.441px;">14</span>
<span class="t" style="left:602.5px;top:469.29px;font-size:10.67px;line-height:14.67px;color:#fff;transform-origin:0 0;transform:scaleX(0.8706);">Nov</span>
<span class="t" style="left:623.2px;top:469.29px;font-size:10.67px;line-height:14.67px;color:#fff;transform-origin:0 0;transform:scaleX(0.8361);">19:30</span>
<span class="t" style="left:652.7px;top:469.29px;font-size:10.67px;line-height:14.67px;color:#fff;letter-spacing:0.441px;">18</span>
<span class="t" style="left:666.5px;top:469.29px;font-size:10.67px;line-height:14.67px;color:#fff;transform-origin:0 0;transform:scaleX(0.8706);">Nov</span>
<span class="t" style="left:687.2px;top:469.29px;font-size:10.67px;line-height:14.67px;color:#fff;transform-origin:0 0;transform:scaleX(0.8361);">03:30</span>
<span class="t" style="left:716.7px;top:469.29px;font-size:10.67px;line-height:14.67px;color:#fff;letter-spacing:0.441px;">19</span>
<span class="t" style="left:730.5px;top:469.29px;font-size:10.67px;line-height:14.67px;color:#fff;transform-origin:0 0;transform:scaleX(0.8706);">Nov</span>
<span class="t" style="left:751.2px;top:469.29px;font-size:10.67px;line-height:14.67px;color:#fff;transform-origin:0 0;transform:scaleX(0.8618);">11:30</span>
<span class="t" style="left:780.7px;top:469.29px;font-size:10.67px;line-height:14.67px;color:#fff;letter-spacing:0.441px;">20</span>
<span class="t" style="left:794.5px;top:469.29px;font-size:10.67px;line-height:14.67px;color:#fff;transform-origin:0 0;transform:scaleX(0.8706);">Nov</span>
<span class="t" style="left:815.2px;top:469.29px;font-size:10.67px;line-height:14.67px;color:#fff;transform-origin:0 0;transform:scaleX(0.8361);">19:30</span>
<span class="t" style="left:844.7px;top:469.29px;font-size:10.67px;line-height:14.67px;color:#fff;letter-spacing:0.441px;">22</span>
<span class="t" style="left:858.5px;top:469.29px;font-size:10.67px;line-height:14.67px;color:#fff;transform-origin:0 0;transform:scaleX(0.8706);">Nov</span>
<span class="t" style="left:879.2px;top:469.29px;font-size:10.67px;line-height:14.67px;color:#fff;transform-origin:0 0;transform:scaleX(0.8361);">03:30</span>
<span class="t" style="left:908.7px;top:469.29px;font-size:10.67px;line-height:14.67px;color:#fff;letter-spacing:0.441px;">25</span>
<span class="t" style="left:922.5px;top:469.29px;font-size:10.67px;line-height:14.67px;color:#fff;transform-origin:0 0;transform:scaleX(0.8706);">Nov</span>
<span class="t" style="left:943.2px;top:469.29px;font-size:10.67px;line-height:14.67px;color:#fff;transform-origin:0 0;transform:scaleX(0.8618);">11:30</span>
<span class="t" style="left:972.7px;top:469.29px;font-size:10.67px;line-height:14.67px;color:#fff;letter-spacing:0.441px;">26</span>
<span class="t" style="left:986.5px;top:469.29px;font-size:10.67px;line-height:14.67px;color:#fff;transform-origin:0 0;transform:scaleX(0.8706);">Nov</span>
<span class="t" style="left:1007.2px;top:469.29px;font-size:10.67px;line-height:14.67px;color:#fff;transform-origin:0 0;transform:scaleX(0.8361);">19:30</span>
<span class="t" style="left:1036.7px;top:469.29px;font-size:10.67px;line-height:14.67px;color:#fff;letter-spacing:0.441px;">28</span>
<span class="t" style="left:1050.5px;top:469.29px;font-size:10.67px;line-height:14.67px;color:#fff;transform-origin:0 0;transform:scaleX(0.8706);">Nov</span>
<span class="t" style="left:1071.2px;top:469.29px;font-size:10.67px;line-height:14.67px;color:#fff;transform-origin:0 0;transform:scaleX(0.8361);">03:30</span>
<span class="t" style="left:1100.7px;top:469.29px;font-size:10.67px;line-height:14.67px;color:#fff;letter-spacing:0.441px;">29</span>
<span class="t" style="left:1114.5px;top:469.29px;font-size:10.67px;line-height:14.67px;color:#fff;transform-origin:0 0;transform:scaleX(0.8706);">Nov</span>
<span class="t" style="left:1135.2px;top:469.29px;font-size:10.67px;line-height:14.67px;color:#fff;transform-origin:0 0;transform:scaleX(0.8618);">11:30</span>
<span class="t" style="left:1164.7px;top:469.29px;font-size:10.67px;line-height:14.67px;color:#fff;letter-spacing:0.062px;">2</span>
<span class="t" style="left:1172.0px;top:469.29px;font-size:10.67px;line-height:14.67px;color:#fff;transform-origin:0 0;transform:scaleX(0.8864);">Dec</span>
<span class="t" style="left:1193.2px;top:469.29px;font-size:10.67px;line-height:14.67px;color:#fff;transform-origin:0 0;transform:scaleX(0.8098);">19:30</span>
<span class="t" style="left:1228.7px;top:469.29px;font-size:10.67px;line-height:14.67px;color:#fff;letter-spacing:0.062px;">4</span>
<span class="t" style="left:1236.0px;top:469.29px;font-size:10.67px;line-height:14.67px;color:#fff;transform-origin:0 0;transform:scaleX(0.8864);">Dec</span>
<span class="t" style="left:1257.2px;top:469.29px;font-size:10.67px;line-height:14.67px;color:#fff;transform-origin:0 0;transform:scaleX(0.8098);">03:30</span>
<span class="t" style="left:1292.7px;top:469.29px;font-size:10.67px;line-height:14.67px;color:#fff;letter-spacing:0.062px;">5</span>
<span class="t" style="left:1300.0px;top:469.29px;font-size:10.67px;line-height:14.67px;color:#fff;transform-origin:0 0;transform:scaleX(0.8864);">Dec</span>
<span class="t" style="left:1321.2px;top:469.29px;font-size:10.67px;line-height:14.67px;color:#fff;transform-origin:0 0;transform:scaleX(0.8348);">11:30</span>
<span class="t" style="left:1356.7px;top:469.29px;font-size:10.67px;line-height:14.67px;color:#fff;letter-spacing:0.062px;">6</span>
<span class="t" style="left:1364.0px;top:469.29px;font-size:10.67px;line-height:14.67px;color:#fff;transform-origin:0 0;transform:scaleX(0.8864);">Dec</span>
<span class="t" style="left:1385.2px;top:469.29px;font-size:10.67px;line-height:14.67px;color:#fff;transform-origin:0 0;transform:scaleX(0.8098);">19:30</span>
<span class="t" style="left:1420.7px;top:469.29px;font-size:10.67px;line-height:14.67px;color:#fff;letter-spacing:0.441px;">10</span>
<span class="t" style="left:1434.5px;top:469.29px;font-size:10.67px;line-height:14.67px;color:#fff;transform-origin:0 0;transform:scaleX(0.8706);">Dec</span>
<span class="t" style="left:1455.2px;top:469.29px;font-size:10.67px;line-height:14.67px;color:#fff;transform-origin:0 0;transform:scaleX(0.8361);">03:30</span>
<span class="t" style="left:1484.7px;top:469.29px;font-size:10.67px;line-height:14.67px;color:#fff;letter-spacing:1.237px;">11</span>
<span class="t" style="left:1498.5px;top:469.29px;font-size:10.67px;line-height:14.67px;color:#fff;transform-origin:0 0;transform:scaleX(0.8706);">Dec</span>
<span class="t" style="left:1519.2px;top:469.29px;font-size:10.67px;line-height:14.67px;color:#fff;transform-origin:0 0;transform:scaleX(0.8618);">11:30</span>
<span class="t" style="left:1548.7px;top:469.29px;font-size:10.67px;line-height:14.67px;color:#fff;letter-spacing:0.441px;">12</span>
<span class="t" style="left:1562.5px;top:469.29px;font-size:10.67px;line-height:14.67px;color:#fff;transform-origin:0 0;transform:scaleX(0.8706);">Dec</span>
<span class="t" style="left:1583.2px;top:469.29px;font-size:10.67px;line-height:14.67px;color:#fff;transform-origin:0 0;transform:scaleX(0.8361);">19:30</span>
<span class="t" style="left:1870.4px;top:102.19px;font-size:10.67px;line-height:14.67px;color:#fff;transform-origin:0 0;transform:scaleX(0.8668);">0.90785</span>
<div style="left:1868px;top:110px;width:39px;height:11px;background:#8497ae;"></div>
<span class="t" style="left:1870.4px;top:109.09px;font-size:10.67px;line-height:14.67px;color:#000;transform-origin:0 0;transform:scaleX(0.8720);">0.90434</span>
<div style="left:891px;top:128px;width:288px;height:59px;background:#ffffff;"></div>
<span class="t" style="left:899px;top:134.74px;font-size:12px;line-height:16px;color:#000;transform-origin:0 0;transform:scaleX(0.9791);">Период графика</span>
<svg style="left:1157px;top:136px;" width="13" height="13" viewBox="0 0 13 13"><path d="M1.8 1.2 L11.6 11 M11.6 1.2 L1.8 11" stroke="#111" stroke-width="1.1" fill="none"/></svg>
<div style="left:988px;top:159px;width:30px;height:26px;background:#cce4f7;box-shadow:inset 0 0 0 1px #99d1ff;"></div>
<span class="t" style="left:899.5px;top:164.54px;font-size:12px;line-height:16px;color:#1b6aab;transform-origin:0 0;transform:scaleX(0.9297);">M1</span>
<span class="t" style="left:931.5px;top:164.54px;font-size:12px;line-height:16px;color:#1b6aab;transform-origin:0 0;transform:scaleX(0.9597);">M5</span>
<span class="t" style="left:960.5px;top:164.54px;font-size:12px;line-height:16px;color:#1b6aab;transform-origin:0 0;transform:scaleX(0.9424);">M15</span>
<span class="t" style="left:992.5px;top:164.54px;font-size:12px;line-height:16px;color:#1b6aab;transform-origin:0 0;transform:scaleX(0.9639);">M30</span>
<span class="t" style="left:1028.5px;top:164.54px;font-size:12px;line-height:16px;color:#1b6aab;transform-origin:0 0;transform:scaleX(0.8473);">H1</span>
<span class="t" style="left:1060.5px;top:164.54px;font-size:12px;line-height:16px;color:#1b6aab;transform-origin:0 0;transform:scaleX(0.9124);">H4</span>
<span class="t" style="left:1092.5px;top:164.54px;font-size:12px;line-height:16px;color:#1b6aab;transform-origin:0 0;transform:scaleX(0.8473);">D1</span>
<span class="t" style="left:1122.5px;top:164.54px;font-size:12px;line-height:16px;color:#1b6aab;transform-origin:0 0;transform:scaleX(0.9167);">W1</span>
<span class="t" style="left:1154px;top:164.54px;font-size:12px;line-height:16px;color:#1b6aab;transform-origin:0 0;transform:scaleX(0.9908);">MN</span>
<div style="left:522px;top:488px;width:1398px;height:1px;background:#ffffff;"></div>
<div style="left:522px;top:489px;width:1398px;height:1px;background:#ffffff;"></div>
<div style="left:522px;top:490px;width:1398px;height:1px;background:#1c1c1c;"></div>
<div style="left:522px;top:490px;width:1px;height:19px;background:#696969;"></div>
<span class="t" style="left:536px;top:493.34px;font-size:12px;line-height:16px;color:#5f6b7a;transform-origin:0 0;transform:scaleX(0.9337);">AUDUSD,M5</span>
<span class="t" style="left:625px;top:493.34px;font-size:12px;line-height:16px;color:#5f6b7a;transform-origin:0 0;transform:scaleX(0.9171);">XAGUSD,Daily</span>
<span class="t" style="left:721px;top:493.34px;font-size:12px;line-height:16px;color:#5f6b7a;transform-origin:0 0;transform:scaleX(0.9258);">XAUUSD,M15</span>
<span class="t" style="left:815px;top:493.34px;font-size:12px;line-height:16px;color:#5f6b7a;transform-origin:0 0;transform:scaleX(0.9566);">AUDCAD,M15</span>
<span class="t" style="left:912px;top:493.34px;font-size:12px;line-height:16px;color:#5f6b7a;transform-origin:0 0;transform:scaleX(0.9248);">XAUUSD,Daily</span>
<span class="t" style="left:1008px;top:493.34px;font-size:12px;line-height:16px;color:#5f6b7a;transform-origin:0 0;transform:scaleX(0.9295);">AUDUSD,Daily</span>
<span class="t" style="left:1107px;top:493.34px;font-size:12px;line-height:16px;color:#5f6b7a;transform-origin:0 0;transform:scaleX(0.8969);">GBPJPY,Daily</span>
<span class="t" style="left:1199px;top:493.34px;font-size:12px;line-height:16px;color:#5f6b7a;transform-origin:0 0;transform:scaleX(0.9277);">EURCHF,Daily</span>
<span class="t" style="left:1296px;top:493.34px;font-size:12px;line-height:16px;color:#5f6b7a;transform-origin:0 0;transform:scaleX(0.9058);">EURCHF,H1</span>
<span class="t" style="left:1381px;top:493.34px;font-size:12px;line-height:16px;color:#5f6b7a;transform-origin:0 0;transform:scaleX(0.9503);">CADCHF,H1</span>
<span class="t" style="left:1470px;top:493.34px;font-size:12px;line-height:16px;color:#5f6b7a;transform-origin:0 0;transform:scaleX(0.9404);">GBPCHF,Daily</span>
<span class="t" style="left:1664px;top:493.34px;font-size:12px;line-height:16px;color:#5f6b7a;transform-origin:0 0;transform:scaleX(0.8795);">GBPUSD,H1</span>
<span class="t" style="left:1749px;top:493.34px;font-size:12px;line-height:16px;color:#5f6b7a;letter-spacing:-0.105px;">NZDUSD,Monthly</span>
<div style="left:613px;top:493px;width:1px;height:14px;background:#6e6e6e;"></div>
<div style="left:710px;top:493px;width:1px;height:14px;background:#6e6e6e;"></div>
<div style="left:803px;top:493px;width:1px;height:14px;background:#6e6e6e;"></div>
<div style="left:900px;top:493px;width:1px;height:14px;background:#6e6e6e;"></div>
<div style="left:997px;top:493px;width:1px;height:14px;background:#6e6e6e;"></div>
<div style="left:1094px;top:493px;width:1px;height:14px;background:#6e6e6e;"></div>
<div style="left:1187px;top:493px;width:1px;height:14px;background:#6e6e6e;"></div>
<div style="left:1284px;top:493px;width:1px;height:14px;background:#6e6e6e;"></div>
<div style="left:1369px;top:493px;width:1px;height:14px;background:#6e6e6e;"></div>
<div style="left:1457px;top:493px;width:1px;height:14px;background:#6e6e6e;"></div>
<div style="left:1737px;top:493px;width:1px;height:14px;background:#6e6e6e;"></div>
<div style="left:1556px;top:490px;width:96px;height:19px;background:#ffffff;border:1px solid #000;border-top:none;box-sizing:border-box;box-shadow:1px 1px 0 #8a8a8a;"></div>
<span class="t" style="left:1567px;top:492.34px;font-size:12px;line-height:16px;color:#000;transform-origin:0 0;transform:scaleX(0.9566);">AUDCAD,M30</span>
<svg style="left:1882px;top:495px;" width="8" height="10" viewBox="0 0 8 10"><path d="M4.5 2.1 L1 5.5 L4.5 8.9 Z" fill="#111"/></svg>
<svg style="left:1902px;top:495px;" width="8" height="10" viewBox="0 0 8 10"><path d="M1.6 2.1 L5.1 5.5 L1.6 8.9 Z" fill="#b0b0b0"/></svg>
<div style="left:1918px;top:76px;width:2px;height:414px;background:#ffffff;"></div>
<div style="left:1918px;top:491px;width:2px;height:19px;background:#fafafa;"></div>
<div style="left:522px;top:509px;width:1398px;height:1px;background:#e2e2e2;"></div>
<div style="left:0px;top:510px;width:1920px;height:1px;background:#f0f0f0;"></div>
<div style="left:0px;top:511px;width:1920px;height:3px;background:#fbfbfb;"></div>
<svg style="left:3px;top:515px;" width="8" height="8" viewBox="0 0 8 8"><path d="M1 1 L6.6 6.6 M6.6 1 L1 6.6" stroke="#111" stroke-width="1.7" fill="none"/></svg>
<div style="left:1px;top:528px;width:13px;height:485px;background:linear-gradient(180deg,#d9e6f5 0%,#c9d8ea 60%,#bccbdf 100%);"></div>
<span class="t" style="left:1.4px;top:1012.3px;font-size:12px;line-height:14px;transform-origin:0 0;transform:rotate(-90deg) scaleX(0.905);">Инструменты</span>
<div style="left:15px;top:514px;width:1901px;height:477px;background:#ffffff;"></div>
<div style="left:15px;top:514px;width:1902px;height:1px;background:#a0a0a0;"></div>
<div style="left:15px;top:514px;width:1px;height:499px;background:#8c8c8c;"></div>
<div style="left:1916px;top:514px;width:1px;height:477px;background:#e3e3e3;"></div>
<div style="left:15px;top:990px;width:1901px;height:1px;background:#000000;"></div>
<span class="t" style="left:22px;top:518.94px;font-size:12px;line-height:16px;color:#000;transform-origin:0 0;transform:scaleX(0.9693);">Время</span>
<span class="t" style="left:182px;top:518.94px;font-size:12px;line-height:16px;color:#000;letter-spacing:0.395px;">Источник</span>
<span class="t" style="left:362px;top:518.94px;font-size:12px;line-height:16px;color:#000;letter-spacing:0.086px;">Сообщение</span>
<div style="left:175px;top:515px;width:1px;height:23px;background:#e5e5e5;"></div>
<div style="left:355px;top:515px;width:1px;height:23px;background:#e5e5e5;"></div>
<div style="left:16px;top:558px;width:1900px;height:1px;background:#d2d2d2;"></div>
<div style="left:175px;top:539px;width:1px;height:19px;background:#d2d2d2;"></div>
<div style="left:355px;top:539px;width:1px;height:19px;background:#d2d2d2;"></div>
<div style="left:24px;top:547px;width:4px;height:4px;background:#a3a3a3;border-radius:2px;"></div>
<span class="t" style="left:37px;top:541.34px;font-size:12px;line-height:16px;color:#000;transform-origin:0 0;transform:scaleX(0.8991);">2024.12.13 21:10:05.471</span>
<span class="t" style="left:179px;top:541.34px;font-size:12px;line-height:16px;color:#000;letter-spacing:-0.003px;">Indicators</span>
<span class="t" style="left:359.5px;top:541.34px;font-size:12px;line-height:16px;color:#000;transform-origin:0 0;transform:scaleX(0.9684);">custom indicator spreads (GBPUSD,H1) loaded succesfully</span>
<div style="left:16px;top:559px;width:1900px;height:19px;background:#ebebeb;"></div>
<div style="left:16px;top:578px;width:1900px;height:1px;background:#d2d2d2;"></div>
<div style="left:175px;top:559px;width:1px;height:19px;background:#d2d2d2;"></div>
<div style="left:355px;top:559px;width:1px;height:19px;background:#d2d2d2;"></div>
<div style="left:24px;top:567px;width:4px;height:4px;background:#a3a3a3;border-radius:2px;"></div>
<span class="t" style="left:37px;top:561.34px;font-size:12px;line-height:16px;color:#000;transform-origin:0 0;transform:scaleX(0.8991);">2024.12.13 21:10:05.496</span>
<span class="t" style="left:179px;top:561.34px;font-size:12px;line-height:16px;color:#000;letter-spacing:-0.003px;">Indicators</span>
<span class="t" style="left:359.5px;top:561.34px;font-size:12px;line-height:16px;color:#000;transform-origin:0 0;transform:scaleX(0.9684);">custom indicator spreads (GBPUSD,M30) removed</span>
<div style="left:16px;top:598px;width:1900px;height:1px;background:#d2d2d2;"></div>
<div style="left:175px;top:579px;width:1px;height:19px;background:#d2d2d2;"></div>
<div style="left:355px;top:579px;width:1px;height:19px;background:#d2d2d2;"></div>
<div style="left:24px;top:587px;width:4px;height:4px;background:#a3a3a3;border-radius:2px;"></div>
<span class="t" style="left:37px;top:581.34px;font-size:12px;line-height:16px;color:#000;transform-origin:0 0;transform:scaleX(0.8991);">2024.12.13 21:12:44.204</span>
<span class="t" style="left:179px;top:581.34px;font-size:12px;line-height:16px;color:#000;letter-spacing:-0.003px;">Indicators</span>
<span class="t" style="left:359.5px;top:581.34px;font-size:12px;line-height:16px;color:#000;letter-spacing:-0.109px;">custom indicator spreads (AUDCAD,M30) loaded succesfully</span>
<div style="left:16px;top:599px;width:1900px;height:19px;background:#ebebeb;"></div>
<div style="left:16px;top:618px;width:1900px;height:1px;background:#d2d2d2;"></div>
<div style="left:175px;top:599px;width:1px;height:19px;background:#d2d2d2;"></div>
<div style="left:355px;top:599px;width:1px;height:19px;background:#d2d2d2;"></div>
<div style="left:24px;top:607px;width:4px;height:4px;background:#a3a3a3;border-radius:2px;"></div>
<span class="t" style="left:37px;top:601.34px;font-size:12px;line-height:16px;color:#000;transform-origin:0 0;transform:scaleX(0.8991);">2024.12.13 21:12:44.205</span>
<span class="t" style="left:179px;top:601.34px;font-size:12px;line-height:16px;color:#000;letter-spacing:-0.003px;">Indicators</span>
<span class="t" style="left:359.5px;top:601.34px;font-size:12px;line-height:16px;color:#000;transform-origin:0 0;transform:scaleX(0.9758);">custom indicator Spreads 3 Symbols (AUDCAD,M30) loaded succesfully</span>
<div style="left:16px;top:638px;width:1900px;height:1px;background:#d2d2d2;"></div>
<div style="left:175px;top:619px;width:1px;height:19px;background:#d2d2d2;"></div>
<div style="left:355px;top:619px;width:1px;height:19px;background:#d2d2d2;"></div>
<div style="left:24px;top:627px;width:4px;height:4px;background:#a3a3a3;border-radius:2px;"></div>
<span class="t" style="left:37px;top:621.34px;font-size:12px;line-height:16px;color:#000;transform-origin:0 0;transform:scaleX(0.8991);">2024.12.13 21:12:44.255</span>
<span class="t" style="left:179px;top:621.34px;font-size:12px;line-height:16px;color:#000;letter-spacing:-0.003px;">Indicators</span>
<span class="t" style="left:359.5px;top:621.34px;font-size:12px;line-height:16px;color:#000;transform-origin:0 0;transform:scaleX(0.9756);">custom indicator Spreads 3 Symbols (AUDCAD,H1) removed</span>
<div style="left:16px;top:639px;width:1900px;height:19px;background:#ebebeb;"></div>
<div style="left:16px;top:658px;width:1900px;height:1px;background:#d2d2d2;"></div>
<div style="left:175px;top:639px;width:1px;height:19px;background:#d2d2d2;"></div>
<div style="left:355px;top:639px;width:1px;height:19px;background:#d2d2d2;"></div>
<div style="left:24px;top:647px;width:4px;height:4px;background:#a3a3a3;border-radius:2px;"></div>
<span class="t" style="left:37px;top:641.34px;font-size:12px;line-height:16px;color:#000;transform-origin:0 0;transform:scaleX(0.8991);">2024.12.13 21:12:44.255</span>
<span class="t" style="left:179px;top:641.34px;font-size:12px;line-height:16px;color:#000;letter-spacing:-0.003px;">Indicators</span>
<span class="t" style="left:359.5px;top:641.34px;font-size:12px;line-height:16px;color:#000;letter-spacing:-0.107px;">custom indicator spreads (AUDCAD,H1) removed</span>
<span class="t" style="left:28px;top:991.94px;font-size:12px;line-height:16px;color:#6d6d6d;letter-spacing:0.123px;">Торговля</span>
<span class="t" style="left:99px;top:991.94px;font-size:12px;line-height:16px;color:#6d6d6d;letter-spacing:0.081px;">Активы</span>
<span class="t" style="left:160px;top:991.94px;font-size:12px;line-height:16px;color:#6d6d6d;letter-spacing:0.076px;">История</span>
<span class="t" style="left:227px;top:991.94px;font-size:12px;line-height:16px;color:#6d6d6d;letter-spacing:0.091px;">Новости</span>
<span class="t" style="left:294px;top:991.94px;font-size:12px;line-height:16px;color:#6d6d6d;letter-spacing:0.168px;">Почта</span>
<span class="t" style="left:355px;top:991.94px;font-size:12px;line-height:16px;color:#6d6d6d;transform-origin:0 0;transform:scaleX(0.9574);">Календарь</span>
<span class="t" style="left:433px;top:991.94px;font-size:12px;line-height:16px;color:#6d6d6d;letter-spacing:0.154px;">Компания</span>
<span class="t" style="left:509px;top:991.94px;font-size:12px;line-height:16px;color:#6d6d6d;letter-spacing:-0.044px;">Алерты</span>
<span class="t" style="left:571px;top:991.94px;font-size:12px;line-height:16px;color:#6d6d6d;transform-origin:0 0;transform:scaleX(0.9514);">Статьи</span>
<span class="t" style="left:628px;top:991.94px;font-size:12px;line-height:16px;color:#6d6d6d;letter-spacing:-0.028px;">Библиотека</span>
<span class="t" style="left:713px;top:991.94px;font-size:12px;line-height:16px;color:#6d6d6d;letter-spacing:-0.103px;">Эксперты</span>
<div style="left:89px;top:994px;width:1px;height:15px;background:#5a5a5a;"></div>
<div style="left:150px;top:994px;width:1px;height:15px;background:#5a5a5a;"></div>
<div style="left:217px;top:994px;width:1px;height:15px;background:#5a5a5a;"></div>
<div style="left:284px;top:994px;width:1px;height:15px;background:#5a5a5a;"></div>
<div style="left:345px;top:994px;width:1px;height:15px;background:#5a5a5a;"></div>
<div style="left:423px;top:994px;width:1px;height:15px;background:#5a5a5a;"></div>
<div style="left:499px;top:994px;width:1px;height:15px;background:#5a5a5a;"></div>
<div style="left:561px;top:994px;width:1px;height:15px;background:#5a5a5a;"></div>
<div style="left:618px;top:994px;width:1px;height:15px;background:#5a5a5a;"></div>
<div style="left:703px;top:994px;width:1px;height:15px;background:#5a5a5a;"></div>
<span class="t" style="left:330px;top:997.91px;font-size:9.6px;line-height:13.6px;color:#f01818;font-weight:700;letter-spacing:-0.044px;">8</span>
<div style="left:776px;top:990px;width:64px;height:20px;background:#ffffff;border:1px solid #000;border-top:none;box-sizing:border-box;box-shadow:1px 1px 0 #8a8a8a;"></div>
<span class="t" style="left:786px;top:991.74px;font-size:12px;line-height:16px;color:#000;letter-spacing:-0.059px;">Журнал</span>
<svg style="left:0px;top:0px;pointer-events:none;" width="1920" height="1040" viewBox="0 0 1920 1040"><path d="M1649.6 1001 L1648.6 1008.6 H1659.4 L1658.4 1001 Z" fill="#ffd200" stroke="#dba400" stroke-width="1"/><path d="M1651.4 1002 V999.4 Q1651.4 997 1654 997 Q1656.6 997 1656.6 999.4 V1002" fill="none" stroke="#dba400" stroke-width="1.2"/><circle cx="1726" cy="1002.5" r="1.2" fill="#b4b4b4"/><path d="M1723.2 1000 Q1721.8 1002.5 1723.2 1005 M1728.8 1000 Q1730.2 1002.5 1728.8 1005 M1720.6 998.4 Q1718.2 1002.5 1720.6 1006.6 M1731.4 998.4 Q1733.8 1002.5 1731.4 1006.6" fill="none" stroke="#b8b8b8" stroke-width="1.1"/><path d="M1803.4 1006 Q1800.4 1006 1800.6 1003.4 Q1800.8 1001.2 1803.2 1001 Q1803.8 997.4 1807.4 997.4 Q1810.6 997.4 1811.4 1000.6 Q1814.4 1000.8 1814.2 1003.6 Q1814 1006 1811.2 1006 Z" fill="#cfe6fa" stroke="#1a66aa" stroke-width="1.2"/><path d="M1801 1009 H1814 M1807.5 1006 V1009" stroke="#1a66aa" stroke-width="1.1" fill="none"/><circle cx="1807.5" cy="1009" r="1" fill="#cfe6fa" stroke="#1a66aa" stroke-width="0.9"/><rect x="1854.5" y="998" width="10" height="10" rx="1.6" fill="#cfe6fa" stroke="#1a66aa" stroke-width="1.3"/><path d="M1856.5 995.8V998M1856.5 1008V1010.2M1859.5 995.8V998M1859.5 1008V1010.2M1862.5 995.8V998M1862.5 1008V1010.2M1852.3 1000H1854.5M1864.5 1000H1866.7M1852.3 1003H1854.5M1864.5 1003H1866.7M1852.3 1006H1854.5M1864.5 1006H1866.7" stroke="#1a66aa" stroke-width="1.25" fill="none"/></svg>
<span class="t" style="left:1665px;top:994.74px;font-size:12px;line-height:16px;color:#000;letter-spacing:0.072px;">Маркет</span>
<span class="t" style="left:1738px;top:994.74px;font-size:12px;line-height:16px;color:#a9a9a9;letter-spacing:0.052px;">Сигналы</span>
<span class="t" style="left:1819px;top:994.74px;font-size:12px;line-height:16px;color:#000;transform-origin:0 0;transform:scaleX(0.8328);">VPS</span>
<span class="t" style="left:1871px;top:994.74px;font-size:12px;line-height:16px;color:#000;transform-origin:0 0;transform:scaleX(0.9199);">Тестер</span>
</body></html>
